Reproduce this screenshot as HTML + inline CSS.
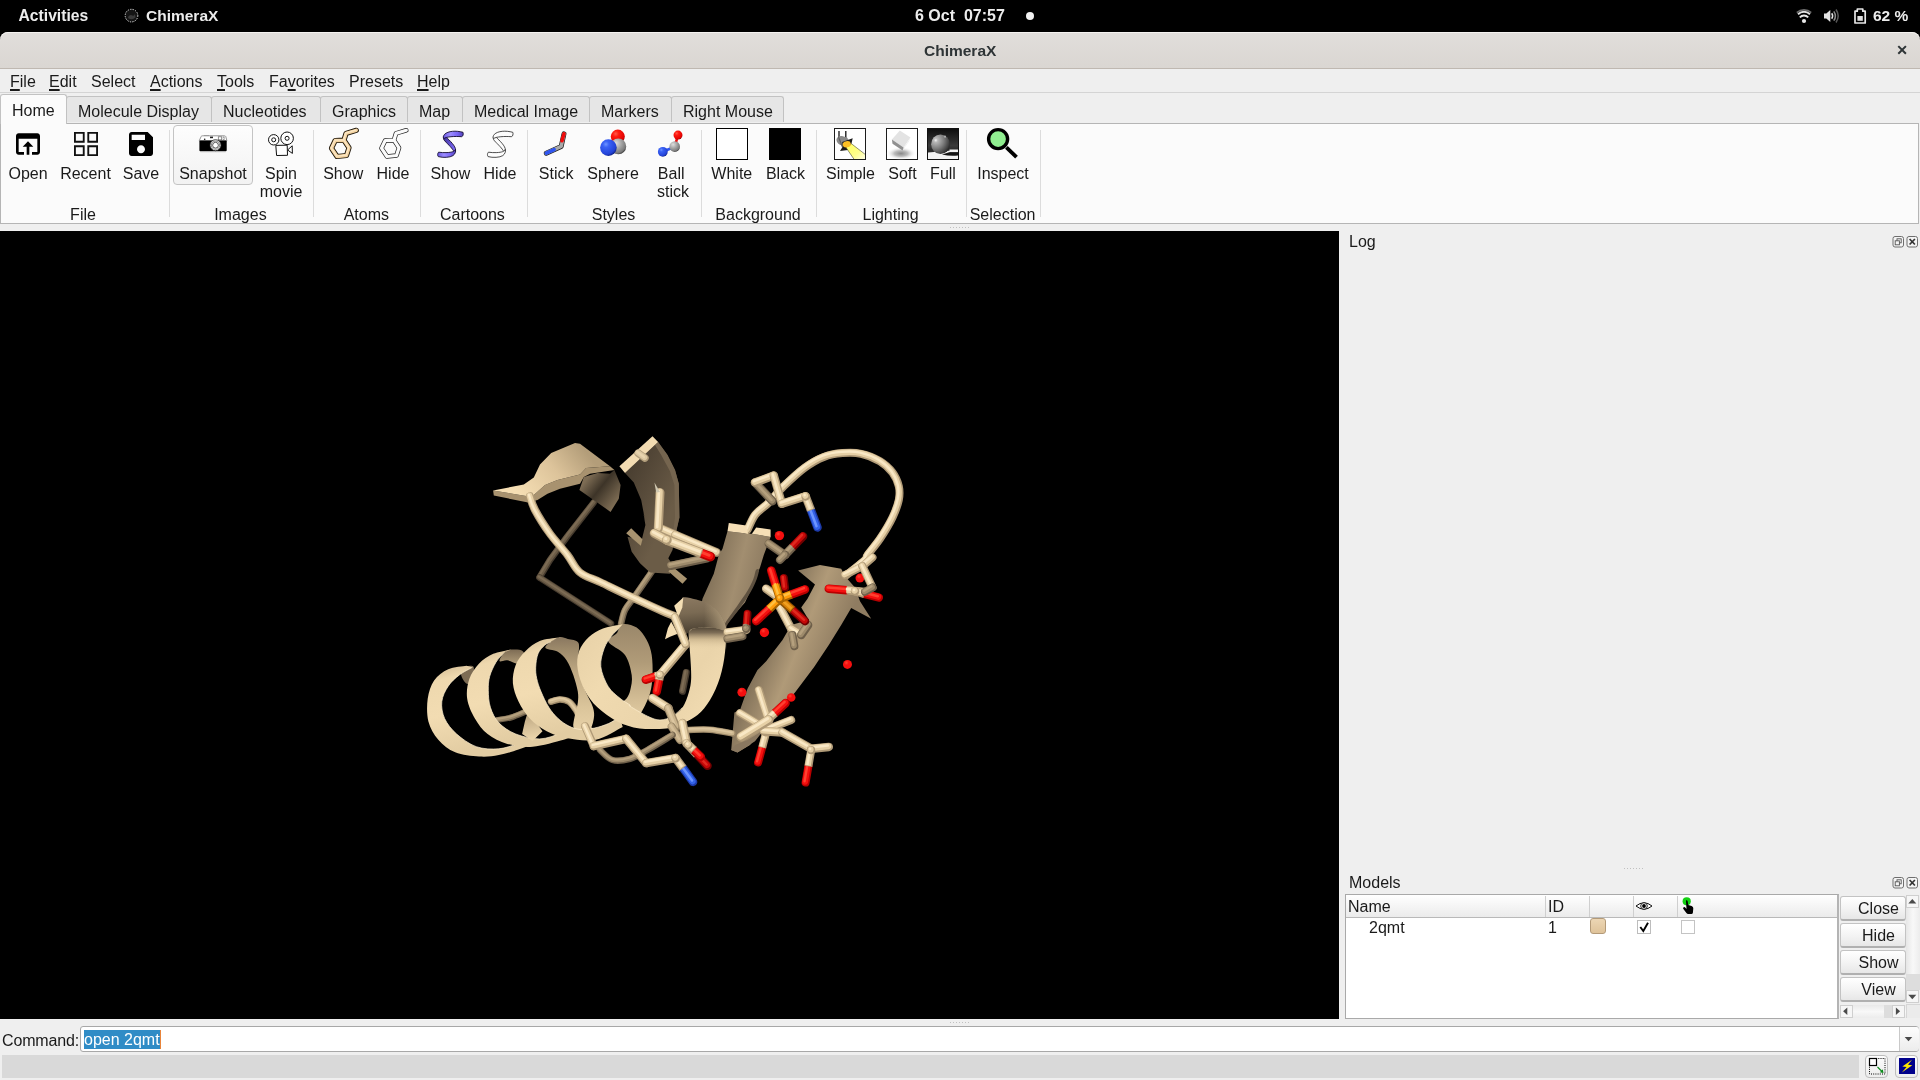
<!DOCTYPE html>
<html>
<head>
<meta charset="utf-8">
<title>ChimeraX</title>
<style>
html,body{margin:0;padding:0;}
body{width:1920px;height:1080px;overflow:hidden;background:#efefef;font-family:"Liberation Sans",sans-serif;font-size:16px;color:#1a1a1a;position:relative;}
.abs{position:absolute;}
.t{position:absolute;white-space:nowrap;line-height:18px;}
#topbar{left:0;top:0;width:1920px;height:32px;background:#000;}
#topbar .t{color:#ececec;font-weight:bold;font-size:15.5px;top:7px;}
#titlebar{left:0;top:32px;width:1920px;height:36px;background:linear-gradient(#e1dedb,#dad6d2);border-radius:8px 8px 0 0;border-bottom:1px solid #bfb8b1;box-shadow:inset 0 1px #f4f2f0;}
#titlebar .t{font-weight:bold;color:#2e3436;}
#menubar{left:0;top:69px;width:1920px;height:23px;background:#efefef;border-bottom:1px solid #d4d4d4;}
#menubar .t{top:4px;}
u{text-decoration:underline;text-underline-offset:2px;text-decoration-thickness:1.6px;}
.tab{position:absolute;top:96px;height:26px;background:#e6e6e6;border:1px solid #c2c2c2;border-bottom:none;border-radius:3px 3px 0 0;box-sizing:border-box;}
.tab .t{top:6px;}
#tabhome{top:94px;height:30px;background:#fbfbfb;z-index:3;}
#toolpanel{left:0;top:123px;width:1919px;height:101px;background:#fbfbfb;border:1px solid #b5b5b5;box-sizing:border-box;}
.sep{position:absolute;top:130px;width:1px;height:87px;background:#dcdcdc;}
.lbl{position:absolute;white-space:nowrap;line-height:18px;text-align:center;transform:translateX(-50%);}
#gfx{left:0;top:231px;width:1339px;height:788px;background:#000;}

.mbtn{position:absolute;left:1840px;width:66px;height:25px;box-sizing:border-box;border:1px solid #c3c3c3;border-bottom:2px solid #b0b0b0;border-radius:3px;background:linear-gradient(#ffffff,#f4f4f4 50%,#e7e7e7);}
.mbtn span{position:absolute;left:37.500px;top:3px;transform:translateX(-50%);line-height:18px;white-space:nowrap;}
</style>
</head>
<body>
<div id="root" style="position:absolute;left:0;top:0;width:1920px;height:1080px;will-change:transform;">
<!-- GNOME top bar -->
<div id="topbar" class="abs">
  <div class="t" style="left:18.500px;font-size:15.700px">Activities</div>
  <div class="t" style="left:146px">ChimeraX</div>
  <div class="t" style="left:915px;font-size:16px">6 Oct&nbsp; 07:57</div>
  <div class="abs" style="left:1026px;top:12px;width:8px;height:8px;border-radius:50%;background:#f2f2f2"></div>
  <div class="t" style="left:1873px">62 %</div>
</div>
<!-- Title bar -->
<div class="abs" style="left:0;top:32px;width:1920px;height:20px;background:#000"></div>
<div id="titlebar" class="abs">
  <div class="t" style="left:924px;top:10px;font-size:15.5px">ChimeraX</div>
</div>

<!-- top bar icons -->
<svg class="abs" style="left:120px;top:4px" width="24" height="24" viewBox="0 0 24 24">
 <circle cx="11.500" cy="11.600" r="5.800" fill="#141414"/>
 <circle cx="11.500" cy="11.600" r="6.300" fill="none" stroke="#f0f0f0" stroke-width="0.900" stroke-dasharray="1.400 1.100"/>
 <path d="M8 13 q2 -3 4.500 -1.500 q1.500 1 2.500 -1.500 l0.500 3.500 q-3 3 -7 1 z" fill="#3a3a3a"/>
</svg>
<svg class="abs" style="left:1790px;top:4px" width="84" height="24" viewBox="1790 4 84 24">
 <!-- wifi -->
 <circle cx="1804" cy="21" r="2.100" fill="#e8e8e8"/>
 <path d="M1799.800 17.300 A5.800 5.800 0 0 1 1808.200 17.300" stroke="#e8e8e8" stroke-width="1.900" fill="none"/>
 <path d="M1798 14.200 A8.600 8.600 0 0 1 1810 14.200" stroke="#e0e0e0" stroke-width="1.900" fill="none"/>
 <path d="M1796.800 12.600 A11 11 0 0 1 1811.200 12.600" stroke="#6e6e6e" stroke-width="1.900" fill="none"/>
 <!-- volume -->
 <path d="M1824 13.500 H1826.300 L1830.300 10 V22 L1826.300 18.500 H1824 Z" fill="#e4e4e4"/>
 <path d="M1831.700 13.300 Q1833.600 16 1831.700 18.700" stroke="#e4e4e4" stroke-width="1.500" fill="none"/>
 <path d="M1833.800 11.300 Q1837 16 1833.800 20.700" stroke="#8c8c8c" stroke-width="1.500" fill="none"/>
 <path d="M1836 9.500 Q1840.400 16 1836 22.500" stroke="#585858" stroke-width="1.500" fill="none"/>
 <!-- battery -->
 <path d="M1855 11.200 H1857.300 V9 H1862.800 V11.200 H1865.200 V23 H1855 Z" fill="none" stroke="#e6e6e6" stroke-width="1.700" stroke-linejoin="round"/>
 <rect x="1857.400" y="16" width="5.400" height="4.800" fill="#e0e0e0"/>
</svg>
<svg class="abs" style="left:1894px;top:42px" width="16" height="16" viewBox="0 0 16 16"><path d="M4.300 4.100 L11.900 11.700 M11.900 4.100 L4.300 11.700" stroke="#2e3436" stroke-width="2" fill="none"/></svg>
<!-- Menu bar -->
<div id="menubar" class="abs">
  <div class="t" style="left:10px"><u>F</u>ile</div>
  <div class="t" style="left:49px"><u>E</u>dit</div>
  <div class="t" style="left:91px">Select</div>
  <div class="t" style="left:150px"><u>A</u>ctions</div>
  <div class="t" style="left:217px"><u>T</u>ools</div>
  <div class="t" style="left:269px">Fa<u>v</u>orites</div>
  <div class="t" style="left:349px">Presets</div>
  <div class="t" style="left:417px"><u>H</u>elp</div>
</div>
<!-- Tabs -->
<div class="tab" id="tabhome" style="left:0px;width:67px"><div class="t" style="left:11px;top:7px">Home</div></div>
<div class="tab" style="left:66px;width:146px"><div class="t" style="left:11px">Molecule Display</div></div>
<div class="tab" style="left:211px;width:110px"><div class="t" style="left:11px">Nucleotides</div></div>
<div class="tab" style="left:320px;width:88px"><div class="t" style="left:11px">Graphics</div></div>
<div class="tab" style="left:407px;width:56px"><div class="t" style="left:11px">Map</div></div>
<div class="tab" style="left:462px;width:128px"><div class="t" style="left:11px">Medical Image</div></div>
<div class="tab" style="left:589px;width:83px"><div class="t" style="left:11px">Markers</div></div>
<div class="tab" style="left:671px;width:113px"><div class="t" style="left:11px">Right Mouse</div></div>
<!-- Tool panel -->
<div id="toolpanel" class="abs"></div>

<!-- Toolbar separators -->
<div class="sep" style="left:169px"></div>
<div class="sep" style="left:313px"></div>
<div class="sep" style="left:420px"></div>
<div class="sep" style="left:527px"></div>
<div class="sep" style="left:701px"></div>
<div class="sep" style="left:816px"></div>
<div class="sep" style="left:966px"></div>
<div class="sep" style="left:1040px"></div>
<!-- Snapshot button frame -->
<div class="abs" style="left:173px;top:125px;width:80px;height:60px;box-sizing:border-box;border:1px solid #c4c4c4;border-radius:4px;background:linear-gradient(#fdfdfd,#f2f2f2)"></div>
<!-- Icons -->
<svg class="abs" style="left:12px;top:128px" width="32" height="32" viewBox="0 0 24 24"><path fill="#000" d="M19 4H5c-1.11 0-2 .9-2 2v12c0 1.1.89 2 2 2h4v-2H5V8h14v10h-4v2h4c1.1 0 2-.9 2-2V6c0-1.1-.89-2-2-2zm-7 6l-4 4h3v6h2v-6h3l-4-4z"/></svg>
<svg class="abs" style="left:70px;top:128px" width="32" height="32" viewBox="0 0 24 24"><path fill="#111" d="M3 3v8h8V3H3zm6.6 6.6H4.4V4.400h5.2v5.2zM3 13v8h8v-8H3zm6.6 6.6H4.4v-5.2h5.2v5.2zM13 3v8h8V3h-8zm6.600 6.600h-5.200V4.400h5.200v5.200zM13 13v8h8v-8h-8zm6.600 6.600h-5.200v-5.200h5.200v5.200z"/></svg>
<svg class="abs" style="left:125px;top:128px" width="32" height="32" viewBox="0 0 24 24"><path fill="#000" d="M17 3H5c-1.11 0-2 .9-2 2v14c0 1.1.89 2 2 2h14c1.1 0 2-.9 2-2V7l-4-4zm-5 16c-1.660 0-3-1.340-3-3s1.340-3 3-3 3 1.340 3 3-1.340 3-3 3zm3-10H5V5h10v4z"/></svg>
<!-- camera -->
<svg class="abs" style="left:196px;top:130px" width="34" height="26" viewBox="0 0 34 26">
 <path d="M3.2 10.800 L5.200 6.400 Q5.600 5.800 6.400 5.800 L28.400 5.800 Q29.400 5.800 29.800 6.600 L30.900 10.800 Z" fill="#fff" stroke="#8a8a8a" stroke-width="0.900"/>
 <rect x="3.400" y="10.600" width="27.300" height="10.600" rx="1" fill="#000"/>
 <rect x="4.400" y="21" width="25.300" height="1.200" fill="#b8b8b8"/>
 <rect x="8" y="5" width="5" height="0.900" fill="#999"/>
 <rect x="14" y="6.600" width="3" height="1.600" fill="#222"/>
 <rect x="22.300" y="6.800" width="3.400" height="3" fill="#fff" stroke="#666" stroke-width="0.700"/>
 <rect x="27" y="6.800" width="1.600" height="3" fill="#fff" stroke="#888" stroke-width="0.500"/>
 <circle cx="8.700" cy="9.300" r="0.800" fill="#111"/>
 <circle cx="19.500" cy="15.200" r="5.500" fill="#fff" stroke="#222" stroke-width="0.800"/>
 <circle cx="19.500" cy="15.200" r="4.100" fill="#fff" stroke="#555" stroke-width="0.700"/>
 <circle cx="19.500" cy="15.200" r="2.900" fill="#fff" stroke="#111" stroke-width="0.700"/>
</svg>
<!-- movie camera -->
<svg class="abs" style="left:264px;top:128px" width="34" height="32" viewBox="0 0 34 32">
 <circle cx="9.700" cy="11.800" r="5.200" fill="#fff" stroke="#111" stroke-width="1"/>
 <circle cx="9.700" cy="11.800" r="2" fill="#fff" stroke="#111" stroke-width="1"/>
 <circle cx="23.100" cy="10.300" r="6.300" fill="#fff" stroke="#111" stroke-width="1"/>
 <circle cx="23.100" cy="10.300" r="2" fill="#fff" stroke="#111" stroke-width="1"/>
 <path d="M11.800 17.400 L23.200 17.200 L23.500 27.300 L12.600 27.500 Z" fill="#fff" stroke="#111" stroke-width="1"/>
 <path d="M23.600 22 L28.200 17.800 L28.400 25.400 Z" fill="#fff" stroke="#111" stroke-width="1"/>
</svg>

<svg class="abs" style="left:0;top:124px" width="1100" height="100" viewBox="0 124 1100 100">
<defs>
<linearGradient id="rbT" x1="0" y1="0" x2="1" y2="0"><stop offset="0" stop-color="#6a58e0"/><stop offset="0.350" stop-color="#9c8cff"/><stop offset="0.700" stop-color="#7a66f5"/><stop offset="1" stop-color="#5443b8"/></linearGradient>
<linearGradient id="rbD" x1="0" y1="0" x2="1" y2="1"><stop offset="0" stop-color="#3a2d90"/><stop offset="0.600" stop-color="#6c5ae0"/><stop offset="1" stop-color="#8a78ff"/></linearGradient>
<radialGradient id="sphB" cx="0.350" cy="0.300" r="0.750"><stop offset="0" stop-color="#6f95ff"/><stop offset="0.250" stop-color="#3a62f5"/><stop offset="0.800" stop-color="#2343d8"/><stop offset="1" stop-color="#0f2080"/></radialGradient>
<radialGradient id="sphG" cx="0.350" cy="0.300" r="0.750"><stop offset="0" stop-color="#dedede"/><stop offset="0.400" stop-color="#adadad"/><stop offset="0.850" stop-color="#7a7a7a"/><stop offset="1" stop-color="#333"/></radialGradient>
<radialGradient id="sphR" cx="0.350" cy="0.300" r="0.750"><stop offset="0" stop-color="#ff5a4a"/><stop offset="0.300" stop-color="#ff1a10"/><stop offset="0.850" stop-color="#e00000"/><stop offset="1" stop-color="#700"/></radialGradient>
<linearGradient id="beam" x1="0" y1="0" x2="1" y2="1"><stop offset="0" stop-color="#ffff5e"/><stop offset="0.600" stop-color="#ffff8c"/><stop offset="1" stop-color="#fffff0"/></linearGradient>
<radialGradient id="shad" cx="0.500" cy="0.500" r="0.500"><stop offset="0" stop-color="#8a8a8a"/><stop offset="0.450" stop-color="#bdbdbd"/><stop offset="1" stop-color="#fff" stop-opacity="0"/></radialGradient>
<radialGradient id="apple" cx="0.250" cy="0.300" r="0.850"><stop offset="0" stop-color="#f4f4f4"/><stop offset="0.120" stop-color="#b9b9b9"/><stop offset="0.500" stop-color="#7e7e7e"/><stop offset="0.850" stop-color="#3e3e3e"/><stop offset="1" stop-color="#1c1c1c"/></radialGradient>
<linearGradient id="fullbg" x1="0" y1="0" x2="0" y2="1"><stop offset="0" stop-color="#0c0c0c"/><stop offset="0.550" stop-color="#3a3a3a"/><stop offset="0.700" stop-color="#2a2a2a"/></linearGradient>
</defs>
<g transform="translate(0,0)" fill="none" stroke-linejoin="round" stroke-linecap="round"><path d="M331.5 148.2 L335.200 140.500 L344 140.200 L349 147.800 L346.500 155.500 L337 156.500 Z M344 140.200 L346 133.400 L356.300 130.300" stroke="#1c1408" stroke-width="5.200"/><path d="M331.5 148.2 L335.200 140.500 L344 140.200 L349 147.800 L346.500 155.500 L337 156.500 Z M344 140.200 L346 133.400 L356.300 130.300" stroke="#f3d3a0" stroke-width="3.400"/><path d="M331.5 148.2 L335.200 140.500 L344 140.200 L349 147.800 L346.500 155.500 L337 156.500 Z M344 140.200 L346 133.400 L356.300 130.300" stroke="#fbe6c4" stroke-width="1.400" transform="translate(-0.300,-0.400)"/></g>
<g transform="translate(50,0)" fill="none" stroke-linejoin="round" stroke-linecap="round"><path d="M331.5 148.2 L335.200 140.500 L344 140.200 L349 147.800 L346.500 155.500 L337 156.500 Z M344 140.200 L346 133.400 L356.300 130.300" stroke="#222" stroke-width="4.600"/><path d="M331.5 148.2 L335.200 140.500 L344 140.200 L349 147.800 L346.500 155.500 L337 156.500 Z M344 140.200 L346 133.400 L356.300 130.300" stroke="#fbfbfb" stroke-width="3.200"/></g>
<g transform="translate(0,0)" stroke="#120a30" stroke-width="0.900" stroke-linejoin="round"><path d="M443.600 136.800 C443 139 444 140.200 446 142.200 C450 146.200 453.800 150 454.300 152.700 L455.600 150 C455.600 146 450.200 141 445.600 136.500 Z" fill="url(#rbD)"/><path d="M463 132.300 C456 130.400 448 130.900 444.600 134.300 C443.100 136 443 137.500 443.800 138.600 C446 136.700 455 136.100 461.500 136.700 C463.100 136.500 463.600 134 463 132.300 Z" fill="url(#rbT)"/><path d="M438.600 152.200 C437.400 153.500 437.400 155.600 438.300 156.600 C443 157.900 450 157.600 453 155.600 C455.200 154 456.100 151.500 455.400 149.500 C454.500 151.500 452 152.300 447 152.600 C444 152.700 441 152.600 438.600 152.200 Z" fill="url(#rbT)"/></g>
<g transform="translate(49.8,0)" stroke="#222" stroke-width="0.800" stroke-linejoin="round" fill="#fdfdfd"><path d="M443.600 136.800 C443 139 444 140.200 446 142.200 C450 146.200 453.800 150 454.300 152.700 L455.600 150 C455.600 146 450.200 141 445.600 136.500 Z"/><path d="M463 132.300 C456 130.400 448 130.900 444.600 134.300 C443.100 136 443 137.500 443.800 138.600 C446 136.700 455 136.100 461.500 136.700 C463.100 136.500 463.600 134 463 132.300 Z"/><path d="M438.600 152.200 C437.400 153.500 437.400 155.600 438.300 156.600 C443 157.900 450 157.600 453 155.600 C455.200 154 456.100 151.500 455.400 149.500 C454.500 151.500 452 152.300 447 152.600 C444 152.700 441 152.600 438.600 152.200 Z"/></g>
<!-- stick -->
<g fill="none" stroke-linecap="round" stroke-linejoin="round">
<path d="M546.300 153.200 L561.200 146.400 L564 133.800" stroke="#1a1a1a" stroke-width="4.900"/>
<path d="M546.300 153.200 L561.200 146.400 L564 133.800" stroke="#a9a9a9" stroke-width="3.500"/>
<path d="M546.300 153.200 L554.200 149.600" stroke="#2f55f0" stroke-width="3.500"/>
<path d="M562 140.800 L564 133.800" stroke="#f00a0a" stroke-width="3.500"/>
</g>
<!-- sphere -->
<circle cx="617.800" cy="136.600" r="7" fill="url(#sphR)"/>
<circle cx="618.300" cy="146.400" r="7.900" fill="url(#sphG)"/>
<circle cx="608.400" cy="147.600" r="8.300" fill="url(#sphB)"/>
<!-- ball stick -->
<path d="M662.800 151.800 L674.700 146.800" stroke="#2f55f0" stroke-width="2.600" fill="none"/>
<path d="M674.700 146.800 L678 135" stroke="#e81010" stroke-width="2.600" fill="none"/>
<circle cx="662.800" cy="151.800" r="4.900" fill="url(#sphB)"/>
<circle cx="674.700" cy="146.600" r="5.300" fill="url(#sphG)"/>
<circle cx="678" cy="135.100" r="4.500" fill="url(#sphR)"/>
<!-- white / black -->
<rect x="716.500" y="128.500" width="31" height="31" fill="#fff" stroke="#000" stroke-width="1"/>
<rect x="769" y="128" width="32" height="32" fill="#000"/>
<!-- simple -->
<rect x="834.500" y="128.500" width="31" height="31" fill="#fff" stroke="#1c1c1c" stroke-width="1"/>
<path d="M839 131 V138 M845.800 131 V138" stroke="#111" stroke-width="1.300" fill="none"/>
<path d="M836.500 139 Q838 135.500 842 136 L847 137.600 L850 142 L845 147 L839.500 144.500 Q836 142 836.500 139 Z" fill="#8a8a8a"/>
<path d="M838.500 137 L842.500 147" stroke="#5e5e5e" stroke-width="1.200" fill="none"/>
<path d="M842.200 142 L852.700 138.300 L851.500 143.500 L848 150 L840 151 L842.800 146.500 Z" fill="#1a1a1a"/>
<path d="M846 147.500 L851.500 143.800 L865.500 154.600 V159.500 H854.200 Z" fill="url(#beam)" stroke="#222" stroke-width="0.500"/>
<rect x="853" y="159" width="13" height="1" fill="#1c1c1c"/>
<rect x="865" y="153" width="1" height="7" fill="#1c1c1c"/>
<ellipse cx="846.800" cy="144.300" rx="4.100" ry="3.100" fill="#fbbf24" transform="rotate(-12 846.800 144.300)"/>
<!-- soft -->
<rect x="886.500" y="128.500" width="31" height="31" fill="#fff" stroke="#1c1c1c" stroke-width="1"/>
<ellipse cx="901" cy="153.500" rx="15" ry="6.500" fill="url(#shad)"/>
<path d="M899.800 130.400 L910.500 137.600 L903.600 147.600 L891.900 139.600 Z" fill="#e3e3e3"/>
<path d="M910.500 137.600 L903.600 147.600 L902.700 150.400 L909 141.500 Z" fill="#f1f1f1"/>
<path d="M891.900 139.600 L903.600 147.600 L902.600 150.400 L892.500 143.800 Z" fill="#909090"/>
<!-- full -->
<rect x="927" y="128" width="32" height="32" fill="url(#fullbg)"/>
<path d="M928 152.500 L946 151 L958 150 V159 H928 Z" fill="#f2f2f2"/>
<path d="M942 154.500 Q950 156.500 958 155.500 V152 L950 152 Z" fill="#151515"/>
<rect x="949.500" y="149.500" width="8.500" height="2.600" fill="#f4f4f4"/>
<ellipse cx="940.500" cy="144.200" rx="9.400" ry="9.800" fill="url(#apple)"/>
<path d="M943.500 136.500 q1.500 -1.500 2.500 -0.500 q0.500 1.500 -1 2 z" fill="#aaa"/>
<rect x="927.500" y="128.500" width="31" height="31" fill="none" stroke="#111" stroke-width="1"/>
<!-- inspect -->
<path d="M1006.400 147.300 L1016.500 157.200" stroke="#000" stroke-width="3.800" fill="none"/>
<circle cx="998.100" cy="139.100" r="9.500" fill="#90ee90" stroke="#000" stroke-width="3.400"/>
</svg>
<!-- Toolbar labels -->
<div class="lbl" style="left:28px;top:165px">Open</div>
<div class="lbl" style="left:85.5px;top:165px">Recent</div>
<div class="lbl" style="left:141px;top:165px">Save</div>
<div class="lbl" style="left:213px;top:165px">Snapshot</div>
<div class="lbl" style="left:281px;top:165px">Spin</div>
<div class="lbl" style="left:281px;top:183px">movie</div>
<div class="lbl" style="left:343.2px;top:165px">Show</div>
<div class="lbl" style="left:393px;top:165px">Hide</div>
<div class="lbl" style="left:450.4px;top:165px">Show</div>
<div class="lbl" style="left:500px;top:165px">Hide</div>
<div class="lbl" style="left:556.2px;top:165px">Stick</div>
<div class="lbl" style="left:613px;top:165px">Sphere</div>
<div class="lbl" style="left:671.2px;top:165px">Ball</div>
<div class="lbl" style="left:673px;top:183px">stick</div>
<div class="lbl" style="left:731.8px;top:165px">White</div>
<div class="lbl" style="left:785.5px;top:165px">Black</div>
<div class="lbl" style="left:850.5px;top:165px">Simple</div>
<div class="lbl" style="left:902.5px;top:165px">Soft</div>
<div class="lbl" style="left:943px;top:165px">Full</div>
<div class="lbl" style="left:1003px;top:165px">Inspect</div>
<div class="lbl" style="left:83px;top:206px">File</div>
<div class="lbl" style="left:240.4px;top:206px">Images</div>
<div class="lbl" style="left:366.3px;top:206px">Atoms</div>
<div class="lbl" style="left:472.4px;top:206px">Cartoons</div>
<div class="lbl" style="left:613.5px;top:206px">Styles</div>
<div class="lbl" style="left:758px;top:206px">Background</div>
<div class="lbl" style="left:890.5px;top:206px">Lighting</div>
<div class="lbl" style="left:1002.6px;top:206px">Selection</div>
<!-- Graphics -->
<div id="gfx" class="abs"></div>
<!--MOL--><svg class="abs" style="left:0;top:231px" width="1339" height="788" viewBox="0 231 1339 788">
<defs><linearGradient id="g1" gradientUnits="userSpaceOnUse" x1="630.0" y1="467.5" x2="680.0" y2="492.5"><stop offset="0" stop-color="#4a3f31"/><stop offset="0.5" stop-color="#5a4d3c"/><stop offset="1" stop-color="#6b5c47"/></linearGradient><linearGradient id="g2" gradientUnits="userSpaceOnUse" x1="580.0" y1="443.8" x2="517.5" y2="492.5"><stop offset="0" stop-color="#b39d79"/><stop offset="0.45" stop-color="#dcc39a"/><stop offset="1" stop-color="#f6dfb4"/></linearGradient><linearGradient id="g3" gradientUnits="userSpaceOnUse" x1="586.2" y1="480.0" x2="617.5" y2="505.0"><stop offset="0" stop-color="#7d6c54"/><stop offset="0.4" stop-color="#3d3428"/><stop offset="1" stop-color="#857359"/></linearGradient><linearGradient id="g4" gradientUnits="userSpaceOnUse" x1="710.0" y1="580.0" x2="760.0" y2="592.5"><stop offset="0" stop-color="#85745b"/><stop offset="0.5" stop-color="#a28e70"/><stop offset="1" stop-color="#8c7a60"/></linearGradient><radialGradient id="g5" cx="0.38" cy="0.32" r="0.75"><stop offset="0" stop-color="#ff4030"/><stop offset="0.35" stop-color="#f50f0f"/><stop offset="0.85" stop-color="#f50f0f"/><stop offset="1" stop-color="#b80000"/></radialGradient><linearGradient id="g6" gradientUnits="userSpaceOnUse" x1="427.7" y1="665.7" x2="450.4" y2="756.5"><stop offset="0" stop-color="#cdb690"/><stop offset="0.18" stop-color="#eed8ae"/><stop offset="0.55" stop-color="#f2dcb2"/><stop offset="1" stop-color="#e2cca2"/></linearGradient><linearGradient id="g7" gradientUnits="userSpaceOnUse" x1="513.0" y1="649.6" x2="513.0" y2="663.9"><stop offset="0" stop-color="#7d6c54"/><stop offset="1" stop-color="#b09b78"/></linearGradient><linearGradient id="g8" gradientUnits="userSpaceOnUse" x1="467.2" y1="649.6" x2="491.4" y2="746.7"><stop offset="0" stop-color="#cdb690"/><stop offset="0.18" stop-color="#eed8ae"/><stop offset="0.55" stop-color="#f2dcb2"/><stop offset="1" stop-color="#e2cca2"/></linearGradient><linearGradient id="g9" gradientUnits="userSpaceOnUse" x1="527.0" y1="711.5" x2="531.2" y2="738.2"><stop offset="0" stop-color="#b8a27e"/><stop offset="1" stop-color="#ead4aa"/></linearGradient><linearGradient id="g10" gradientUnits="userSpaceOnUse" x1="575.0" y1="637.6" x2="575.0" y2="732.6"><stop offset="0" stop-color="#8a7860"/><stop offset="0.12" stop-color="#9d8a6b"/><stop offset="0.4" stop-color="#c2ac86"/><stop offset="0.75" stop-color="#dcc69c"/><stop offset="1" stop-color="#e8d2a8"/></linearGradient><linearGradient id="g11" gradientUnits="userSpaceOnUse" x1="512.9" y1="637.6" x2="538.4" y2="739.7"><stop offset="0" stop-color="#cdb690"/><stop offset="0.18" stop-color="#eed8ae"/><stop offset="0.55" stop-color="#f2dcb2"/><stop offset="1" stop-color="#e2cca2"/></linearGradient><linearGradient id="g12" gradientUnits="userSpaceOnUse" x1="630.0" y1="624.2" x2="630.0" y2="720.0"><stop offset="0" stop-color="#9a876a"/><stop offset="0.4" stop-color="#b09b78"/><stop offset="0.8" stop-color="#d4be96"/><stop offset="1" stop-color="#e4cea4"/></linearGradient><linearGradient id="g13" gradientUnits="userSpaceOnUse" x1="577.0" y1="640.0" x2="700.0" y2="730.0"><stop offset="0" stop-color="#e8d2a8"/><stop offset="0.3" stop-color="#f0dab0"/><stop offset="0.75" stop-color="#ead4aa"/><stop offset="1" stop-color="#f2dcb2"/></linearGradient><linearGradient id="g14" gradientUnits="userSpaceOnUse" x1="700.0" y1="627.0" x2="700.0" y2="650.0"><stop offset="0" stop-color="#4f4435"/><stop offset="0.25" stop-color="rgba(120,104,82,0.95)"/><stop offset="0.55" stop-color="rgba(190,168,130,0.6)"/><stop offset="1" stop-color="rgba(236,214,172,0)"/></linearGradient><linearGradient id="g15" gradientUnits="userSpaceOnUse" x1="700.0" y1="597.0" x2="703.0" y2="630.0"><stop offset="0" stop-color="#8a7860"/><stop offset="0.45" stop-color="#7a6a53"/><stop offset="1" stop-color="#4f4435"/></linearGradient><linearGradient id="g16" gradientUnits="userSpaceOnUse" x1="704.0" y1="615.0" x2="727.0" y2="615.0"><stop offset="0" stop-color="rgba(200,178,140,0)"/><stop offset="1" stop-color="rgba(205,183,145,0.75)"/></linearGradient><linearGradient id="g17" gradientUnits="userSpaceOnUse" x1="772.5" y1="630.0" x2="835.0" y2="655.0"><stop offset="0" stop-color="#85745b"/><stop offset="0.45" stop-color="#b09a78"/><stop offset="1" stop-color="#8f7c61"/></linearGradient><radialGradient id="g18" cx="0.38" cy="0.32" r="0.75"><stop offset="0" stop-color="#ff4030"/><stop offset="0.35" stop-color="#f50f0f"/><stop offset="0.85" stop-color="#f50f0f"/><stop offset="1" stop-color="#b80000"/></radialGradient><radialGradient id="g19" cx="0.38" cy="0.32" r="0.75"><stop offset="0" stop-color="#ff4030"/><stop offset="0.35" stop-color="#f50f0f"/><stop offset="0.85" stop-color="#f50f0f"/><stop offset="1" stop-color="#b80000"/></radialGradient><radialGradient id="g20" cx="0.38" cy="0.32" r="0.75"><stop offset="0" stop-color="#ff4030"/><stop offset="0.35" stop-color="#f50f0f"/><stop offset="0.85" stop-color="#f50f0f"/><stop offset="1" stop-color="#b80000"/></radialGradient><radialGradient id="g21" cx="0.38" cy="0.32" r="0.75"><stop offset="0" stop-color="#ff4030"/><stop offset="0.35" stop-color="#f50f0f"/><stop offset="0.85" stop-color="#f50f0f"/><stop offset="1" stop-color="#b80000"/></radialGradient><radialGradient id="g22" cx="0.38" cy="0.32" r="0.75"><stop offset="0" stop-color="#ff4030"/><stop offset="0.35" stop-color="#f50f0f"/><stop offset="0.85" stop-color="#f50f0f"/><stop offset="1" stop-color="#b80000"/></radialGradient></defs>
<path d="M593.8 502.5 L567.5 536.2 L550.0 560.0 L539.5 577.5" stroke="#463b2e" stroke-width="6.5" fill="none" stroke-linecap="round" stroke-linejoin="round"/>
<path d="M593.8 502.5 L567.5 536.2 L550.0 560.0 L539.5 577.5" stroke="#6b5c47" stroke-width="4.7" fill="none" stroke-linecap="round" stroke-linejoin="round" transform="translate(-0.4,-0.5)"/>
<path d="M593.8 502.5 L567.5 536.2 L550.0 560.0 L539.5 577.5" stroke="#7d6c55" stroke-width="1.9" fill="none" stroke-linecap="round" stroke-linejoin="round" transform="translate(-0.8,-1.0)"/>
<path d="M539.5 577.5 L611.0 623.5" stroke="#463b2e" stroke-width="6.5" fill="none" stroke-linecap="round" stroke-linejoin="round"/>
<path d="M539.5 577.5 L611.0 623.5" stroke="#6b5c47" stroke-width="4.7" fill="none" stroke-linecap="round" stroke-linejoin="round" transform="translate(-0.4,-0.5)"/>
<path d="M539.5 577.5 L611.0 623.5" stroke="#7d6c55" stroke-width="1.9" fill="none" stroke-linecap="round" stroke-linejoin="round" transform="translate(-0.8,-1.0)"/>
<path d="M653.0 570.0 C650.0 574.3 639.7 589.3 635.0 596.0 C630.3 602.7 627.3 605.3 625.0 610.0 C622.7 614.7 621.7 621.7 621.0 624.0" stroke="#6e5f4a" stroke-width="6.5" fill="none" stroke-linecap="round" stroke-linejoin="round"/>
<path d="M653.0 570.0 C650.0 574.3 639.7 589.3 635.0 596.0 C630.3 602.7 627.3 605.3 625.0 610.0 C622.7 614.7 621.7 621.7 621.0 624.0" stroke="#9d8a6b" stroke-width="4.7" fill="none" stroke-linecap="round" stroke-linejoin="round" transform="translate(-0.4,-0.5)"/>
<path d="M653.0 570.0 C650.0 574.3 639.7 589.3 635.0 596.0 C630.3 602.7 627.3 605.3 625.0 610.0 C622.7 614.7 621.7 621.7 621.0 624.0" stroke="#b5a07e" stroke-width="1.9" fill="none" stroke-linecap="round" stroke-linejoin="round" transform="translate(-0.8,-1.0)"/>
<path d="M625.0 473.1 L658.1 441.9 L667.5 455.0 L675.0 470.0 L678.8 483.8 L679.4 517.5 L675.0 536.2 L678.8 520.8 L675.0 535.8 L672.5 550.0 L668.3 558.3 L673.8 566.7 L670.0 573.8 L650.0 572.5 L640.0 563.3 L631.7 551.7 L627.5 536.7 L641.7 540.0 L645.4 525.0 L643.3 512.5 L645.0 520.0 L641.2 500.0 L633.8 482.5 Z" fill="url(#g1)" />
<path d="M658.1 441.9 L667.5 455.0 L675.0 470.0 L678.8 483.8 L679.4 517.5 L675.0 536.2 L672.5 536.2 L675.0 517.5 L674.4 485.0 L670.0 471.2 L661.2 455.0 L655.0 445.0 Z" fill="#75654f" />
<path d="M626.2 533.3 L631.2 528.3 L642.5 539.2 L640.8 545.8 Z" fill="#a8936f" />
<path d="M668.3 571.2 L672.9 567.1 L687.1 578.8 L682.5 583.8 Z" fill="#a8936f" />
<path d="M619.4 466.2 L652.5 436.2 L658.1 441.9 L625.0 473.1 Z" fill="#f3dcb2" />
<path d="M638.1 453.1 L645.0 458.1" stroke="#b09c7a" stroke-width="7.5" fill="none" stroke-linecap="round" stroke-linejoin="round"/>
<path d="M638.1 453.1 L645.0 458.1" stroke="#dcc8a2" stroke-width="5.4" fill="none" stroke-linecap="round" stroke-linejoin="round" transform="translate(-0.4,-0.6)"/>
<path d="M638.1 453.1 L645.0 458.1" stroke="#e8d4ae" stroke-width="2.2" fill="none" stroke-linecap="round" stroke-linejoin="round" transform="translate(-0.9,-1.1)"/>
<path d="M583.8 476.9 L597.5 473.1 L610.0 473.8 L614.4 470.0 L620.6 485.0 L618.8 498.8 L610.6 511.9 L579.4 490.0 Z" fill="url(#g3)" />
<path d="M493.1 490.6 L527.5 496.2 L533.8 495.0 L545.0 485.0 L557.5 480.0 L580.0 474.4 L586.2 468.1 L610.0 466.2 L614.4 470.0 L590.0 473.8 L583.8 476.9 L580.0 483.8 L560.0 488.8 L547.5 493.8 L537.5 500.0 L528.1 502.5 L493.8 495.6 Z" fill="#a8926f" />
<path d="M493.1 490.6 L523.8 484.4 L533.8 477.5 L540.0 464.4 L551.2 453.1 L575.0 443.1 L580.0 443.8 L610.0 466.2 L586.2 468.1 L580.0 474.4 L557.5 480.0 L545.0 485.0 L533.8 495.0 L527.5 496.2 Z" fill="url(#g2)" />
<path d="M530.0 496.2 C530.8 498.5 531.7 503.8 535.0 510.0 C538.3 516.2 544.6 526.2 550.0 533.8 C555.4 541.2 562.5 548.5 567.5 555.0 C572.5 561.5 574.4 567.9 580.0 572.5 C585.6 577.1 592.2 578.3 601.0 582.5 C609.8 586.7 622.3 592.8 632.5 597.5 C642.7 602.2 652.4 606.9 662.0 611.0 C671.6 615.1 685.3 620.2 690.0 622.0" stroke="#b09a77" stroke-width="8.0" fill="none" stroke-linecap="round" stroke-linejoin="round"/>
<path d="M530.0 496.2 C530.8 498.5 531.7 503.8 535.0 510.0 C538.3 516.2 544.6 526.2 550.0 533.8 C555.4 541.2 562.5 548.5 567.5 555.0 C572.5 561.5 574.4 567.9 580.0 572.5 C585.6 577.1 592.2 578.3 601.0 582.5 C609.8 586.7 622.3 592.8 632.5 597.5 C642.7 602.2 652.4 606.9 662.0 611.0 C671.6 615.1 685.3 620.2 690.0 622.0" stroke="#e6d0a6" stroke-width="5.8" fill="none" stroke-linecap="round" stroke-linejoin="round" transform="translate(-0.5,-0.6)"/>
<path d="M530.0 496.2 C530.8 498.5 531.7 503.8 535.0 510.0 C538.3 516.2 544.6 526.2 550.0 533.8 C555.4 541.2 562.5 548.5 567.5 555.0 C572.5 561.5 574.4 567.9 580.0 572.5 C585.6 577.1 592.2 578.3 601.0 582.5 C609.8 586.7 622.3 592.8 632.5 597.5 C642.7 602.2 652.4 606.9 662.0 611.0 C671.6 615.1 685.3 620.2 690.0 622.0" stroke="#f9e8c6" stroke-width="2.4" fill="none" stroke-linecap="round" stroke-linejoin="round" transform="translate(-1.0,-1.2)"/>
<path d="M670.8 565.8 L706.7 558.3" stroke="#6e5f4a" stroke-width="8.5" fill="none" stroke-linecap="round" stroke-linejoin="round"/>
<path d="M670.8 565.8 L706.7 558.3" stroke="#9d8a6b" stroke-width="6.1" fill="none" stroke-linecap="round" stroke-linejoin="round" transform="translate(-0.5,-0.7)"/>
<path d="M670.8 565.8 L706.7 558.3" stroke="#b5a07e" stroke-width="2.5" fill="none" stroke-linecap="round" stroke-linejoin="round" transform="translate(-1.0,-1.3)"/>
<path d="M658.3 527.5 L675.4 535.0" stroke="#b09a77" stroke-width="8.5" fill="none" stroke-linecap="round" stroke-linejoin="round"/>
<path d="M658.3 527.5 L675.4 535.0" stroke="#e6d0a6" stroke-width="6.1" fill="none" stroke-linecap="round" stroke-linejoin="round" transform="translate(-0.5,-0.7)"/>
<path d="M658.3 527.5 L675.4 535.0" stroke="#f9e8c6" stroke-width="2.5" fill="none" stroke-linecap="round" stroke-linejoin="round" transform="translate(-1.0,-1.3)"/>
<path d="M675.4 535.0 L716.7 552.5" stroke="#b09a77" stroke-width="8.5" fill="none" stroke-linecap="round" stroke-linejoin="round"/>
<path d="M675.4 535.0 L716.7 552.5" stroke="#e6d0a6" stroke-width="6.1" fill="none" stroke-linecap="round" stroke-linejoin="round" transform="translate(-0.5,-0.7)"/>
<path d="M675.4 535.0 L716.7 552.5" stroke="#f9e8c6" stroke-width="2.5" fill="none" stroke-linecap="round" stroke-linejoin="round" transform="translate(-1.0,-1.3)"/>
<path d="M660.0 492.5 L658.3 528.3" stroke="#b09a77" stroke-width="9.0" fill="none" stroke-linecap="round" stroke-linejoin="round"/>
<path d="M660.0 492.5 L658.3 528.3" stroke="#e6d0a6" stroke-width="6.5" fill="none" stroke-linecap="round" stroke-linejoin="round" transform="translate(-0.5,-0.7)"/>
<path d="M660.0 492.5 L658.3 528.3" stroke="#f9e8c6" stroke-width="2.7" fill="none" stroke-linecap="round" stroke-linejoin="round" transform="translate(-1.1,-1.3)"/>
<path d="M654.4 482.5 L660.0 491.9 L656.2 492.5 Z" fill="#cfc7b0" />
<path d="M654.2 533.3 L666.7 540.0" stroke="#b09a77" stroke-width="9.0" fill="none" stroke-linecap="round" stroke-linejoin="round"/>
<path d="M654.2 533.3 L666.7 540.0" stroke="#e6d0a6" stroke-width="6.5" fill="none" stroke-linecap="round" stroke-linejoin="round" transform="translate(-0.5,-0.7)"/>
<path d="M654.2 533.3 L666.7 540.0" stroke="#f9e8c6" stroke-width="2.7" fill="none" stroke-linecap="round" stroke-linejoin="round" transform="translate(-1.1,-1.3)"/>
<path d="M701.7 553.3 L710.4 556.7" stroke="#b80000" stroke-width="9.5" fill="none" stroke-linecap="round" stroke-linejoin="round"/>
<path d="M701.7 553.3 L710.4 556.7" stroke="#f50f0f" stroke-width="6.8" fill="none" stroke-linecap="round" stroke-linejoin="round" transform="translate(-0.6,-0.8)"/>
<path d="M701.7 553.3 L710.4 556.7" stroke="#ff4030" stroke-width="2.9" fill="none" stroke-linecap="round" stroke-linejoin="round" transform="translate(-1.1,-1.4)"/>
<path d="M666.7 540.0 L701.7 553.3" stroke="#b09a77" stroke-width="9.5" fill="none" stroke-linecap="butt" stroke-linejoin="round"/>
<path d="M666.7 540.0 L701.7 553.3" stroke="#e6d0a6" stroke-width="6.8" fill="none" stroke-linecap="butt" stroke-linejoin="round" transform="translate(-0.6,-0.8)"/>
<path d="M666.7 540.0 L701.7 553.3" stroke="#f9e8c6" stroke-width="2.9" fill="none" stroke-linecap="butt" stroke-linejoin="round" transform="translate(-1.1,-1.4)"/>
<path d="M666.7 540.0 L667.0 540.1" stroke="#b09a77" stroke-width="9.5" fill="none" stroke-linecap="round" stroke-linejoin="round"/>
<path d="M666.7 540.0 L667.0 540.1" stroke="#e6d0a6" stroke-width="6.8" fill="none" stroke-linecap="round" stroke-linejoin="round" transform="translate(-0.6,-0.8)"/>
<path d="M666.7 540.0 L667.0 540.1" stroke="#f9e8c6" stroke-width="2.9" fill="none" stroke-linecap="round" stroke-linejoin="round" transform="translate(-1.1,-1.4)"/>
<path d="M727.5 531.2 L748.1 533.8 L751.9 533.8 L770.6 536.9 L763.8 555.0 L760.0 567.5 L752.5 586.2 L745.0 602.5 L735.0 613.8 L726.2 625.0 L725.0 635.0 L697.5 625.0 L702.5 598.8 L713.8 573.8 L718.8 555.0 L722.5 548.8 Z" fill="url(#g4)" />
<path d="M759.0 570.0 C759.1 571.5 758.0 575.6 756.7 579.2 C755.3 582.8 753.6 586.9 750.8 591.7 C748.1 596.5 743.8 602.6 740.0 607.9 C736.2 613.2 730.7 619.9 728.3 623.3 C726.0 626.7 726.5 628.3 726.0 628.3 C725.5 628.3 723.4 626.9 725.2 623.3 C726.9 619.7 732.9 612.1 736.7 606.7 C740.4 601.2 744.7 595.4 747.5 590.8 C750.3 586.2 751.9 582.6 753.3 579.2 C754.8 575.7 755.1 571.5 756.0 570.0 C756.9 568.5 758.9 568.5 759.0 570.0 Z" fill="#5e5140" />
<path d="M747.5 530.0 C748.8 527.5 751.7 519.4 755.0 515.0 C758.3 510.6 762.7 508.5 767.5 503.8 C772.3 499.0 777.5 492.3 783.8 486.2 C790.0 480.2 798.3 472.4 805.0 467.5 C811.7 462.6 817.5 459.3 823.8 456.9 C830.0 454.5 836.2 453.6 842.5 453.1 C848.8 452.6 855.0 452.4 861.2 453.8 C867.5 455.1 874.8 458.1 880.0 461.2 C885.2 464.4 889.4 468.3 892.5 472.5 C895.6 476.7 897.7 481.7 898.8 486.2 C899.8 490.8 899.8 494.8 898.8 500.0 C897.7 505.2 895.6 511.0 892.5 517.5 C889.4 524.0 884.2 532.5 880.0 538.8 C875.8 545.0 870.0 551.5 867.5 555.0 C865.0 558.5 867.7 557.3 865.0 560.0 C862.3 562.7 854.6 568.5 851.2 571.2 C847.9 574.0 846.0 575.4 845.0 576.2" stroke="#b09a77" stroke-width="8.0" fill="none" stroke-linecap="round" stroke-linejoin="round"/>
<path d="M747.5 530.0 C748.8 527.5 751.7 519.4 755.0 515.0 C758.3 510.6 762.7 508.5 767.5 503.8 C772.3 499.0 777.5 492.3 783.8 486.2 C790.0 480.2 798.3 472.4 805.0 467.5 C811.7 462.6 817.5 459.3 823.8 456.9 C830.0 454.5 836.2 453.6 842.5 453.1 C848.8 452.6 855.0 452.4 861.2 453.8 C867.5 455.1 874.8 458.1 880.0 461.2 C885.2 464.4 889.4 468.3 892.5 472.5 C895.6 476.7 897.7 481.7 898.8 486.2 C899.8 490.8 899.8 494.8 898.8 500.0 C897.7 505.2 895.6 511.0 892.5 517.5 C889.4 524.0 884.2 532.5 880.0 538.8 C875.8 545.0 870.0 551.5 867.5 555.0 C865.0 558.5 867.7 557.3 865.0 560.0 C862.3 562.7 854.6 568.5 851.2 571.2 C847.9 574.0 846.0 575.4 845.0 576.2" stroke="#e6d0a6" stroke-width="5.8" fill="none" stroke-linecap="round" stroke-linejoin="round" transform="translate(-0.5,-0.6)"/>
<path d="M747.5 530.0 C748.8 527.5 751.7 519.4 755.0 515.0 C758.3 510.6 762.7 508.5 767.5 503.8 C772.3 499.0 777.5 492.3 783.8 486.2 C790.0 480.2 798.3 472.4 805.0 467.5 C811.7 462.6 817.5 459.3 823.8 456.9 C830.0 454.5 836.2 453.6 842.5 453.1 C848.8 452.6 855.0 452.4 861.2 453.8 C867.5 455.1 874.8 458.1 880.0 461.2 C885.2 464.4 889.4 468.3 892.5 472.5 C895.6 476.7 897.7 481.7 898.8 486.2 C899.8 490.8 899.8 494.8 898.8 500.0 C897.7 505.2 895.6 511.0 892.5 517.5 C889.4 524.0 884.2 532.5 880.0 538.8 C875.8 545.0 870.0 551.5 867.5 555.0 C865.0 558.5 867.7 557.3 865.0 560.0 C862.3 562.7 854.6 568.5 851.2 571.2 C847.9 574.0 846.0 575.4 845.0 576.2" stroke="#f9e8c6" stroke-width="2.4" fill="none" stroke-linecap="round" stroke-linejoin="round" transform="translate(-1.0,-1.2)"/>
<path d="M728.8 523.1 L746.2 525.6 L748.1 533.8 L727.5 531.2 Z" fill="#f6dfb6" />
<path d="M756.2 527.5 L770.6 529.4 L770.6 536.9 L751.9 533.8 Z" fill="#f6dfb6" />
<path d="M755.0 482.5 L772.5 501.2" stroke="#6e5f4a" stroke-width="8.5" fill="none" stroke-linecap="round" stroke-linejoin="round"/>
<path d="M755.0 482.5 L772.5 501.2" stroke="#9d8a6b" stroke-width="6.1" fill="none" stroke-linecap="round" stroke-linejoin="round" transform="translate(-0.5,-0.7)"/>
<path d="M755.0 482.5 L772.5 501.2" stroke="#b5a07e" stroke-width="2.5" fill="none" stroke-linecap="round" stroke-linejoin="round" transform="translate(-1.0,-1.3)"/>
<path d="M755.0 482.5 L773.8 475.6" stroke="#b09a77" stroke-width="8.5" fill="none" stroke-linecap="round" stroke-linejoin="round"/>
<path d="M755.0 482.5 L773.8 475.6" stroke="#e6d0a6" stroke-width="6.1" fill="none" stroke-linecap="round" stroke-linejoin="round" transform="translate(-0.5,-0.7)"/>
<path d="M755.0 482.5 L773.8 475.6" stroke="#f9e8c6" stroke-width="2.5" fill="none" stroke-linecap="round" stroke-linejoin="round" transform="translate(-1.0,-1.3)"/>
<path d="M773.8 475.6 L781.9 503.8" stroke="#b09a77" stroke-width="8.5" fill="none" stroke-linecap="round" stroke-linejoin="round"/>
<path d="M773.8 475.6 L781.9 503.8" stroke="#e6d0a6" stroke-width="6.1" fill="none" stroke-linecap="round" stroke-linejoin="round" transform="translate(-0.5,-0.7)"/>
<path d="M773.8 475.6 L781.9 503.8" stroke="#f9e8c6" stroke-width="2.5" fill="none" stroke-linecap="round" stroke-linejoin="round" transform="translate(-1.0,-1.3)"/>
<path d="M781.9 503.8 L805.6 496.2" stroke="#b09a77" stroke-width="8.5" fill="none" stroke-linecap="round" stroke-linejoin="round"/>
<path d="M781.9 503.8 L805.6 496.2" stroke="#e6d0a6" stroke-width="6.1" fill="none" stroke-linecap="round" stroke-linejoin="round" transform="translate(-0.5,-0.7)"/>
<path d="M781.9 503.8 L805.6 496.2" stroke="#f9e8c6" stroke-width="2.5" fill="none" stroke-linecap="round" stroke-linejoin="round" transform="translate(-1.0,-1.3)"/>
<path d="M811.0 510.3 L817.5 527.5" stroke="#1d3aa8" stroke-width="8.5" fill="none" stroke-linecap="round" stroke-linejoin="round"/>
<path d="M811.0 510.3 L817.5 527.5" stroke="#3362e8" stroke-width="6.1" fill="none" stroke-linecap="round" stroke-linejoin="round" transform="translate(-0.5,-0.7)"/>
<path d="M811.0 510.3 L817.5 527.5" stroke="#6d95ff" stroke-width="2.5" fill="none" stroke-linecap="round" stroke-linejoin="round" transform="translate(-1.0,-1.3)"/>
<path d="M805.6 496.2 L811.0 510.3" stroke="#b09a77" stroke-width="8.5" fill="none" stroke-linecap="butt" stroke-linejoin="round"/>
<path d="M805.6 496.2 L811.0 510.3" stroke="#e6d0a6" stroke-width="6.1" fill="none" stroke-linecap="butt" stroke-linejoin="round" transform="translate(-0.5,-0.7)"/>
<path d="M805.6 496.2 L811.0 510.3" stroke="#f9e8c6" stroke-width="2.5" fill="none" stroke-linecap="butt" stroke-linejoin="round" transform="translate(-1.0,-1.3)"/>
<path d="M805.6 496.2 L805.7 496.4" stroke="#b09a77" stroke-width="8.5" fill="none" stroke-linecap="round" stroke-linejoin="round"/>
<path d="M805.6 496.2 L805.7 496.4" stroke="#e6d0a6" stroke-width="6.1" fill="none" stroke-linecap="round" stroke-linejoin="round" transform="translate(-0.5,-0.7)"/>
<path d="M805.6 496.2 L805.7 496.4" stroke="#f9e8c6" stroke-width="2.5" fill="none" stroke-linecap="round" stroke-linejoin="round" transform="translate(-1.0,-1.3)"/>
<circle cx="779.4" cy="535.6" r="4.7" fill="url(#g5)"/>
<path d="M768.8 543.8 L785.0 555.0" stroke="#6e5f4a" stroke-width="8.5" fill="none" stroke-linecap="round" stroke-linejoin="round"/>
<path d="M768.8 543.8 L785.0 555.0" stroke="#9d8a6b" stroke-width="6.1" fill="none" stroke-linecap="round" stroke-linejoin="round" transform="translate(-0.5,-0.7)"/>
<path d="M768.8 543.8 L785.0 555.0" stroke="#b5a07e" stroke-width="2.5" fill="none" stroke-linecap="round" stroke-linejoin="round" transform="translate(-1.0,-1.3)"/>
<path d="M792.6 547.1 L803.1 536.2" stroke="#700000" stroke-width="8.5" fill="none" stroke-linecap="round" stroke-linejoin="round"/>
<path d="M792.6 547.1 L803.1 536.2" stroke="#c60808" stroke-width="6.1" fill="none" stroke-linecap="round" stroke-linejoin="round" transform="translate(-0.5,-0.7)"/>
<path d="M792.6 547.1 L803.1 536.2" stroke="#e02a20" stroke-width="2.5" fill="none" stroke-linecap="round" stroke-linejoin="round" transform="translate(-1.0,-1.3)"/>
<path d="M785.0 555.0 L792.6 547.1" stroke="#6e5f4a" stroke-width="8.5" fill="none" stroke-linecap="butt" stroke-linejoin="round"/>
<path d="M785.0 555.0 L792.6 547.1" stroke="#9d8a6b" stroke-width="6.1" fill="none" stroke-linecap="butt" stroke-linejoin="round" transform="translate(-0.5,-0.7)"/>
<path d="M785.0 555.0 L792.6 547.1" stroke="#b5a07e" stroke-width="2.5" fill="none" stroke-linecap="butt" stroke-linejoin="round" transform="translate(-1.0,-1.3)"/>
<path d="M785.0 555.0 L785.1 554.9" stroke="#6e5f4a" stroke-width="8.5" fill="none" stroke-linecap="round" stroke-linejoin="round"/>
<path d="M785.0 555.0 L785.1 554.9" stroke="#9d8a6b" stroke-width="6.1" fill="none" stroke-linecap="round" stroke-linejoin="round" transform="translate(-0.5,-0.7)"/>
<path d="M785.0 555.0 L785.1 554.9" stroke="#b5a07e" stroke-width="2.5" fill="none" stroke-linecap="round" stroke-linejoin="round" transform="translate(-1.0,-1.3)"/>
<path d="M785.0 555.0 L780.0 560.0" stroke="#6e5f4a" stroke-width="8.0" fill="none" stroke-linecap="round" stroke-linejoin="round"/>
<path d="M785.0 555.0 L780.0 560.0" stroke="#9d8a6b" stroke-width="5.8" fill="none" stroke-linecap="round" stroke-linejoin="round" transform="translate(-0.5,-0.6)"/>
<path d="M785.0 555.0 L780.0 560.0" stroke="#b5a07e" stroke-width="2.4" fill="none" stroke-linecap="round" stroke-linejoin="round" transform="translate(-1.0,-1.2)"/>
<path d="M497.0 720.0 C499.3 719.6 506.2 718.9 511.0 717.5 C515.8 716.1 523.5 712.5 526.0 711.5" stroke="#6e5f4a" stroke-width="6.0" fill="none" stroke-linecap="round" stroke-linejoin="round"/>
<path d="M497.0 720.0 C499.3 719.6 506.2 718.9 511.0 717.5 C515.8 716.1 523.5 712.5 526.0 711.5" stroke="#9d8a6b" stroke-width="4.3" fill="none" stroke-linecap="round" stroke-linejoin="round" transform="translate(-0.4,-0.5)"/>
<path d="M497.0 720.0 C499.3 719.6 506.2 718.9 511.0 717.5 C515.8 716.1 523.5 712.5 526.0 711.5" stroke="#b5a07e" stroke-width="1.8" fill="none" stroke-linecap="round" stroke-linejoin="round" transform="translate(-0.7,-0.9)"/>
<path d="M551.0 701.7 C552.5 701.3 557.0 699.4 560.0 699.4 C563.0 699.4 566.4 700.0 569.0 701.7 C571.6 703.4 574.0 707.4 575.5 709.4 C577.0 711.4 576.8 711.9 578.0 714.0 C579.2 716.1 581.0 719.3 583.0 722.0 C585.0 724.7 588.8 728.7 590.0 730.0" stroke="#9c8868" stroke-width="6.5" fill="none" stroke-linecap="round" stroke-linejoin="round"/>
<path d="M551.0 701.7 C552.5 701.3 557.0 699.4 560.0 699.4 C563.0 699.4 566.4 700.0 569.0 701.7 C571.6 703.4 574.0 707.4 575.5 709.4 C577.0 711.4 576.8 711.9 578.0 714.0 C579.2 716.1 581.0 719.3 583.0 722.0 C585.0 724.7 588.8 728.7 590.0 730.0" stroke="#cdb790" stroke-width="4.7" fill="none" stroke-linecap="round" stroke-linejoin="round" transform="translate(-0.4,-0.5)"/>
<path d="M551.0 701.7 C552.5 701.3 557.0 699.4 560.0 699.4 C563.0 699.4 566.4 700.0 569.0 701.7 C571.6 703.4 574.0 707.4 575.5 709.4 C577.0 711.4 576.8 711.9 578.0 714.0 C579.2 716.1 581.0 719.3 583.0 722.0 C585.0 724.7 588.8 728.7 590.0 730.0" stroke="#e0caa2" stroke-width="1.9" fill="none" stroke-linecap="round" stroke-linejoin="round" transform="translate(-0.8,-1.0)"/>
<path d="M462.2 667.9 C464.2 666.3 472.0 664.9 473.5 666.7 C475.0 668.6 472.4 676.2 471.4 679.1 C470.3 682.0 468.8 684.5 467.2 684.0 C465.5 683.6 462.3 679.0 461.5 676.3 C460.7 673.6 460.2 669.5 462.2 667.9 Z" fill="#7d6c54" />
<path d="M466.5 665.7 C463.4 666.3 453.5 666.8 448.2 669.3 C442.8 671.7 437.5 675.6 434.1 680.5 C430.7 685.5 428.7 692.0 427.7 698.8 C426.8 705.6 426.7 714.5 428.4 721.4 C430.2 728.2 433.8 734.5 438.3 739.7 C442.8 744.8 448.4 749.5 455.2 752.3 C462.0 755.1 471.8 756.1 479.1 756.5 C486.4 757.0 492.3 756.3 498.8 755.1 C505.4 754.0 512.9 751.4 518.5 749.5 C524.2 747.6 530.3 744.8 532.6 743.9 L529.8 738.2 C527.7 739.2 522.3 742.1 517.1 743.9 C512.0 745.6 505.6 748.3 498.8 748.8 C492.0 749.3 483.3 749.2 476.3 746.7 C469.3 744.2 461.9 738.7 456.6 734.0 C451.3 729.3 447.1 723.9 444.6 718.5 C442.2 713.1 441.2 707.0 441.8 701.6 C442.4 696.2 445.2 690.6 448.2 686.2 C451.1 681.7 455.4 678.0 459.4 674.9 C463.4 671.8 470.2 668.6 472.4 667.3 Z" fill="url(#g6)"/>
<path d="M472.4 667.3 C470.2 668.6 463.4 671.8 459.4 674.9 C455.4 678.0 451.1 681.7 448.2 686.2 C445.2 690.6 442.4 696.2 441.8 701.6 C441.2 707.0 442.2 713.1 444.6 718.5 C447.1 723.9 451.3 729.3 456.6 734.0 C461.9 738.7 469.3 744.2 476.3 746.7 C483.3 749.2 492.0 749.3 498.8 748.8 C505.6 748.3 512.0 745.6 517.1 743.9 C522.3 742.1 527.7 739.2 529.8 738.2" fill="none" stroke="#fff0d0" stroke-width="0.9" stroke-opacity="0.8"/>
<path d="M504.5 652.1 C506.5 650.2 508.4 649.7 511.5 649.6 C514.5 649.4 520.2 649.1 522.8 651.2 C525.3 653.4 527.7 660.1 527.0 662.2 C526.3 664.3 521.8 664.2 518.5 663.9 C515.3 663.6 510.4 660.7 507.3 660.3 C504.1 659.8 500.0 662.5 499.5 661.1 C499.1 659.7 502.5 654.0 504.5 652.1 Z" fill="url(#g7)"/>
<path d="M511.5 649.6 C508.4 650.3 498.6 651.4 493.2 653.8 C487.8 656.1 483.1 659.4 479.1 663.6 C475.1 667.9 471.3 673.3 469.3 679.1 C467.3 685.0 466.2 692.3 467.2 698.8 C468.1 705.4 471.5 712.7 474.9 718.5 C478.3 724.4 482.2 729.8 487.6 734.0 C493.0 738.2 499.8 741.8 507.3 743.9 C514.8 746.0 523.2 747.4 532.6 746.7 C542.0 746.0 556.5 741.4 563.6 739.7 C570.6 737.9 573.0 736.7 574.8 736.1 L572.0 728.4 C570.2 729.2 566.2 731.6 560.8 733.3 C555.4 735.1 547.2 738.8 539.7 738.9 C532.1 739.1 522.5 736.7 515.7 734.0 C508.9 731.3 503.1 727.2 498.8 722.8 C494.6 718.3 492.1 712.7 490.4 707.3 C488.6 701.9 488.4 695.5 488.3 690.4 C488.2 685.2 488.4 681.0 489.7 676.3 C491.0 671.6 493.6 666.3 496.0 662.2 C498.5 658.2 503.1 653.8 504.5 652.1 Z" fill="url(#g8)"/>
<path d="M504.5 652.1 C503.1 653.8 498.5 658.2 496.0 662.2 C493.6 666.3 491.0 671.6 489.7 676.3 C488.4 681.0 488.2 685.2 488.3 690.4 C488.4 695.5 488.6 701.9 490.4 707.3 C492.1 712.7 494.6 718.3 498.8 722.8 C503.1 727.2 508.9 731.3 515.7 734.0 C522.5 736.7 532.1 739.1 539.7 738.9 C547.2 738.8 555.4 735.1 560.8 733.3 C566.2 731.6 570.2 729.2 572.0 728.4" fill="none" stroke="#fff0d0" stroke-width="0.9" stroke-opacity="0.8"/>
<path d="M528.4 710.1 L524.9 721.4 L522.1 734.0 L532.6 741.1 L542.5 731.2 L535.4 721.4 Z" fill="url(#g9)" />
<path d="M545.3 647.4 C545.3 649.8 554.2 649.5 557.8 651.7 C561.4 653.9 564.1 656.6 566.7 660.5 C569.3 664.4 571.4 669.9 573.3 675.0 C575.1 680.2 577.0 687.0 577.8 691.6 C578.5 696.3 578.3 698.8 577.8 702.8 C577.3 706.8 575.6 711.7 574.8 715.7 C574.1 719.8 572.7 724.2 573.4 727.0 C574.1 729.8 576.5 731.9 579.1 732.6 C581.6 733.3 586.5 733.6 588.9 731.2 C591.4 728.9 593.2 722.5 593.8 718.5 C594.5 714.5 594.2 711.8 592.9 707.3 C591.5 702.8 587.7 697.0 585.5 691.6 C583.4 686.3 581.2 680.6 580.1 675.0 C578.9 669.5 578.6 663.7 578.4 658.3 C578.1 652.9 580.1 646.0 578.4 642.8 C576.6 639.6 571.2 639.9 567.8 639.0 C564.4 638.1 561.7 636.2 558.0 637.6 C554.2 639.0 545.3 645.1 545.3 647.4 Z" fill="url(#g10)"/>
<path d="M558.0 637.6 C554.9 638.2 545.0 638.9 539.7 641.1 C534.3 643.3 529.6 647.0 525.6 651.0 C521.6 655.0 517.8 659.6 515.7 665.0 C513.6 670.4 512.4 677.2 512.9 683.3 C513.4 689.4 515.7 695.8 518.5 701.6 C521.4 707.5 525.1 713.6 529.8 718.5 C534.5 723.5 540.4 727.9 546.7 731.2 C553.0 734.5 559.6 736.8 567.8 738.2 C576.0 739.7 586.8 741.5 596.0 739.7 C605.1 737.8 618.2 729.1 622.7 727.0 L619.9 717.1 C618.0 718.2 612.9 721.6 608.6 723.5 C604.4 725.3 599.2 727.1 594.4 728.1 C589.6 729.1 584.3 729.7 580.1 729.4 C575.8 729.0 572.6 728.0 568.9 726.1 C565.2 724.3 561.2 721.4 557.8 718.3 C554.5 715.1 551.6 711.7 548.8 707.3 C546.0 702.9 543.1 696.6 541.1 691.8 C539.0 687.0 537.6 682.5 536.7 678.4 C535.8 674.3 535.5 671.3 535.7 667.2 C535.9 663.1 536.5 657.4 538.0 653.8 C539.4 650.1 542.4 647.3 544.6 645.3 C546.7 643.3 549.9 642.4 550.9 641.8 Z" fill="url(#g11)"/>
<path d="M550.9 641.8 C549.9 642.4 546.7 643.3 544.6 645.3 C542.4 647.3 539.4 650.1 538.0 653.8 C536.5 657.4 535.9 663.1 535.7 667.2 C535.5 671.3 535.8 674.3 536.7 678.4 C537.6 682.5 539.0 687.0 541.1 691.8 C543.1 696.6 546.0 702.9 548.8 707.3 C551.6 711.7 554.5 715.1 557.8 718.3 C561.2 721.4 565.2 724.3 568.9 726.1 C572.6 728.0 575.8 729.0 580.1 729.4 C584.3 729.7 589.6 729.1 594.4 728.1 C599.2 727.1 604.4 725.3 608.6 723.5 C612.9 721.6 618.0 718.2 619.9 717.1" fill="none" stroke="#fff0d0" stroke-width="0.9" stroke-opacity="0.8"/>
<path d="M608.3 641.7 C606.9 638.1 614.3 636.2 616.7 633.3 C619.0 630.4 619.2 625.1 622.5 624.2 C625.8 623.2 632.6 624.9 636.7 627.5 C640.7 630.1 644.2 635.4 646.7 640.0 C649.2 644.6 650.7 649.2 651.7 655.0 C652.6 660.8 652.8 668.6 652.5 675.0 C652.2 681.4 651.8 687.2 650.0 693.3 C648.2 699.4 644.4 707.2 641.7 711.7 C638.9 716.1 636.9 720.8 633.3 720.0 C629.7 719.2 621.1 710.3 620.0 706.7 C618.9 703.1 624.9 701.1 626.7 698.3 C628.4 695.6 629.5 693.9 630.3 690.0 C631.2 686.1 632.6 680.8 631.7 675.0 C630.8 669.2 628.9 660.6 625.0 655.0 C621.1 649.4 609.7 645.3 608.3 641.7 Z" fill="url(#g12)"/>
<path d="M622.7 624.2 C619.4 624.9 608.6 626.3 603.0 628.4 C597.4 630.6 592.9 633.1 588.9 636.9 C584.9 640.6 580.9 645.6 579.1 651.0 C577.2 656.4 576.7 662.7 577.7 669.3 C578.6 675.8 581.4 684.0 584.7 690.4 C588.0 696.7 592.0 702.1 597.4 707.3 C602.8 712.4 610.0 717.8 617.1 721.4 C624.1 724.9 631.4 727.2 639.6 728.4 C647.8 729.6 659.8 729.0 666.3 728.4 C672.9 727.8 673.6 727.2 678.8 725.0 C684.0 722.8 692.3 719.2 697.5 715.0 C702.7 710.8 706.2 706.2 710.0 700.0 C713.8 693.8 717.5 685.4 720.0 677.5 C722.5 669.6 724.1 660.4 725.0 652.5 C725.9 644.6 726.3 636.2 725.5 630.0 C724.7 623.8 723.2 619.4 720.0 615.0 C716.8 610.6 712.5 606.7 706.2 603.8 C700.0 600.9 686.5 598.5 682.5 597.5 L688.8 632.0 C688.8 633.3 688.8 636.6 689.0 640.0 C689.2 643.4 689.6 646.2 690.0 652.5 C690.4 658.8 691.4 670.8 691.2 677.5 C691.0 684.2 690.2 687.5 688.8 692.5 C687.3 697.5 685.2 703.5 682.5 707.5 C679.8 711.5 676.2 714.1 672.5 716.2 C668.8 718.3 664.2 720.0 660.0 720.0 C655.8 720.0 652.5 718.5 647.5 716.2 C642.5 713.9 632.9 708.1 630.0 706.2 C627.1 704.3 631.7 706.3 630.0 705.0 C628.3 703.7 623.6 701.4 620.0 698.3 C616.4 695.3 611.5 691.9 608.3 686.7 C605.1 681.4 601.5 673.1 600.8 666.7 C600.1 660.3 602.4 653.5 604.2 648.3 C606.0 643.2 609.2 639.2 611.7 635.8 C614.2 632.5 617.9 629.6 619.2 628.3 Z" fill="url(#g13)"/>
<path d="M688.5 632.0 L692.5 628.5 L703.3 627.3 L715.8 628.0 L726.5 630.5 L726.3 654.0 L690.0 654.0 Z" fill="url(#g14)" />
<path d="M683.3 597.5 C685.3 596.3 691.8 598.4 695.0 599.2 C698.2 599.9 704.4 601.7 707.5 603.3 C710.6 605.0 716.1 609.2 718.3 611.7 C720.6 614.1 723.1 619.1 724.2 621.7 C725.2 624.2 727.4 629.9 726.2 630.8 C725.1 631.7 718.9 628.8 715.8 628.3 C712.8 627.9 706.4 627.4 703.3 627.5 C700.2 627.6 694.4 628.2 692.5 628.8 C690.6 629.3 689.6 630.9 688.8 631.7 C687.9 632.4 686.8 634.6 685.8 634.2 C684.9 633.7 682.7 630.4 681.7 628.3 C680.7 626.2 678.6 621.0 678.3 618.3 C678.1 615.7 679.3 611.1 680.0 608.3 C680.7 605.6 681.3 598.7 683.3 597.5 Z" fill="url(#g15)"/>
<path d="M683.3 597.5 C685.3 596.3 691.8 598.4 695.0 599.2 C698.2 599.9 704.4 601.7 707.5 603.3 C710.6 605.0 716.1 609.2 718.3 611.7 C720.6 614.1 723.1 619.1 724.2 621.7 C725.2 624.2 727.4 629.9 726.2 630.8 C725.1 631.7 718.9 628.8 715.8 628.3 C712.8 627.9 706.4 627.4 703.3 627.5 C700.2 627.6 694.4 628.2 692.5 628.8 C690.6 629.3 689.6 630.9 688.8 631.7 C687.9 632.4 686.8 634.6 685.8 634.2 C684.9 633.7 682.7 630.4 681.7 628.3 C680.7 626.2 678.6 621.0 678.3 618.3 C678.1 615.7 679.3 611.1 680.0 608.3 C680.7 605.6 681.3 598.7 683.3 597.5 Z" fill="url(#g16)"/>
<path d="M674.2 605.8 L683.3 597.5 L682.3 607.5 L678.3 617.1 Z" fill="#f4deb4" />
<path d="M665.0 639.2 L667.9 628.3 L671.2 621.7 L677.7 633.8 L670.0 636.7 Z" fill="#f4deb4" />
<path d="M619.2 628.3 C617.9 629.6 614.2 632.5 611.7 635.8 C609.2 639.2 606.0 643.2 604.2 648.3 C602.4 653.5 600.1 660.3 600.8 666.7 C601.5 673.1 605.1 681.4 608.3 686.7 C611.5 691.9 616.4 695.3 620.0 698.3 C623.6 701.4 628.3 703.7 630.0 705.0 C631.7 706.3 627.1 704.3 630.0 706.2 C632.9 708.1 642.5 713.9 647.5 716.2 C652.5 718.5 655.8 720.0 660.0 720.0 C664.2 720.0 668.8 718.3 672.5 716.2 C676.2 714.1 680.8 709.0 682.5 707.5" fill="none" stroke="#fff0d0" stroke-width="0.9" stroke-opacity="0.8"/>
<path d="M798.1 570.6 L820.0 565.0 L841.2 568.8 L845.0 576.2 L855.0 587.5 L860.0 601.2 L871.2 618.8 L851.2 608.1 L841.2 625.0 L828.8 645.0 L813.8 667.5 L811.9 670.0 L795.0 692.5 L772.5 716.2 L760.0 732.5 L750.0 745.0 L737.5 752.5 L731.2 750.0 L734.4 712.5 L740.0 710.0 L747.5 688.8 L757.5 670.0 L766.2 661.2 L782.5 640.0 L791.2 625.0 L808.8 620.0 L801.2 607.5 L807.5 598.8 L815.0 584.4 Z" fill="url(#g17)" />
<path d="M731.2 750.0 L737.5 752.5 L755.0 741.2 L763.8 730.0 L747.5 740.0 L735.0 745.0 Z" fill="#8a7860" />
<path d="M688.8 730.0 C692.3 730.0 702.7 729.2 710.0 729.8 C717.3 730.3 728.8 732.9 732.5 733.5" stroke="#9c8868" stroke-width="6.5" fill="none" stroke-linecap="round" stroke-linejoin="round"/>
<path d="M688.8 730.0 C692.3 730.0 702.7 729.2 710.0 729.8 C717.3 730.3 728.8 732.9 732.5 733.5" stroke="#cbb58e" stroke-width="4.7" fill="none" stroke-linecap="round" stroke-linejoin="round" transform="translate(-0.4,-0.5)"/>
<path d="M688.8 730.0 C692.3 730.0 702.7 729.2 710.0 729.8 C717.3 730.3 728.8 732.9 732.5 733.5" stroke="#dcc6a0" stroke-width="1.9" fill="none" stroke-linecap="round" stroke-linejoin="round" transform="translate(-0.8,-1.0)"/>
<path d="M783.8 578.1 L785.0 587.8" stroke="#700000" stroke-width="8.0" fill="none" stroke-linecap="round" stroke-linejoin="round"/>
<path d="M783.8 578.1 L785.0 587.8" stroke="#c60808" stroke-width="5.8" fill="none" stroke-linecap="round" stroke-linejoin="round" transform="translate(-0.5,-0.6)"/>
<path d="M783.8 578.1 L785.0 587.8" stroke="#e02a20" stroke-width="2.4" fill="none" stroke-linecap="round" stroke-linejoin="round" transform="translate(-1.0,-1.2)"/>
<path d="M766.2 588.8 L780.0 598.8" stroke="#b09a77" stroke-width="8.5" fill="none" stroke-linecap="round" stroke-linejoin="round"/>
<path d="M766.2 588.8 L780.0 598.8" stroke="#e6d0a6" stroke-width="6.1" fill="none" stroke-linecap="round" stroke-linejoin="round" transform="translate(-0.5,-0.7)"/>
<path d="M766.2 588.8 L780.0 598.8" stroke="#f9e8c6" stroke-width="2.5" fill="none" stroke-linecap="round" stroke-linejoin="round" transform="translate(-1.0,-1.3)"/>
<path d="M780.0 607.5 L791.2 628.8" stroke="#b09a77" stroke-width="8.5" fill="none" stroke-linecap="round" stroke-linejoin="round"/>
<path d="M780.0 607.5 L791.2 628.8" stroke="#e6d0a6" stroke-width="6.1" fill="none" stroke-linecap="round" stroke-linejoin="round" transform="translate(-0.5,-0.7)"/>
<path d="M780.0 607.5 L791.2 628.8" stroke="#f9e8c6" stroke-width="2.5" fill="none" stroke-linecap="round" stroke-linejoin="round" transform="translate(-1.0,-1.3)"/>
<path d="M791.2 628.8 L801.2 635.0" stroke="#b09a77" stroke-width="8.5" fill="none" stroke-linecap="round" stroke-linejoin="round"/>
<path d="M791.2 628.8 L801.2 635.0" stroke="#e6d0a6" stroke-width="6.1" fill="none" stroke-linecap="round" stroke-linejoin="round" transform="translate(-0.5,-0.7)"/>
<path d="M791.2 628.8 L801.2 635.0" stroke="#f9e8c6" stroke-width="2.5" fill="none" stroke-linecap="round" stroke-linejoin="round" transform="translate(-1.0,-1.3)"/>
<path d="M801.2 635.0 L808.1 625.0" stroke="#6e5f4a" stroke-width="8.5" fill="none" stroke-linecap="round" stroke-linejoin="round"/>
<path d="M801.2 635.0 L808.1 625.0" stroke="#9d8a6b" stroke-width="6.1" fill="none" stroke-linecap="round" stroke-linejoin="round" transform="translate(-0.5,-0.7)"/>
<path d="M801.2 635.0 L808.1 625.0" stroke="#b5a07e" stroke-width="2.5" fill="none" stroke-linecap="round" stroke-linejoin="round" transform="translate(-1.0,-1.3)"/>
<path d="M792.5 635.0 L794.4 646.2" stroke="#6e5f4a" stroke-width="8.0" fill="none" stroke-linecap="round" stroke-linejoin="round"/>
<path d="M792.5 635.0 L794.4 646.2" stroke="#9d8a6b" stroke-width="5.8" fill="none" stroke-linecap="round" stroke-linejoin="round" transform="translate(-0.5,-0.6)"/>
<path d="M792.5 635.0 L794.4 646.2" stroke="#b5a07e" stroke-width="2.4" fill="none" stroke-linecap="round" stroke-linejoin="round" transform="translate(-1.0,-1.2)"/>
<path d="M792.5 610.0 L805.0 621.2" stroke="#700000" stroke-width="8.5" fill="none" stroke-linecap="round" stroke-linejoin="round"/>
<path d="M792.5 610.0 L805.0 621.2" stroke="#c60808" stroke-width="6.1" fill="none" stroke-linecap="round" stroke-linejoin="round" transform="translate(-0.5,-0.7)"/>
<path d="M792.5 610.0 L805.0 621.2" stroke="#e02a20" stroke-width="2.5" fill="none" stroke-linecap="round" stroke-linejoin="round" transform="translate(-1.0,-1.3)"/>
<path d="M780.0 598.8 L792.5 610.0" stroke="#8a5000" stroke-width="8.5" fill="none" stroke-linecap="butt" stroke-linejoin="round"/>
<path d="M780.0 598.8 L792.5 610.0" stroke="#d98206" stroke-width="6.1" fill="none" stroke-linecap="butt" stroke-linejoin="round" transform="translate(-0.5,-0.7)"/>
<path d="M780.0 598.8 L792.5 610.0" stroke="#f0a020" stroke-width="2.5" fill="none" stroke-linecap="butt" stroke-linejoin="round" transform="translate(-1.0,-1.3)"/>
<path d="M780.0 598.8 L780.1 598.9" stroke="#8a5000" stroke-width="8.5" fill="none" stroke-linecap="round" stroke-linejoin="round"/>
<path d="M780.0 598.8 L780.1 598.9" stroke="#d98206" stroke-width="6.1" fill="none" stroke-linecap="round" stroke-linejoin="round" transform="translate(-0.5,-0.7)"/>
<path d="M780.0 598.8 L780.1 598.9" stroke="#f0a020" stroke-width="2.5" fill="none" stroke-linecap="round" stroke-linejoin="round" transform="translate(-1.0,-1.3)"/>
<path d="M769.3 608.9 L756.2 621.2" stroke="#b80000" stroke-width="8.5" fill="none" stroke-linecap="round" stroke-linejoin="round"/>
<path d="M769.3 608.9 L756.2 621.2" stroke="#f50f0f" stroke-width="6.1" fill="none" stroke-linecap="round" stroke-linejoin="round" transform="translate(-0.5,-0.7)"/>
<path d="M769.3 608.9 L756.2 621.2" stroke="#ff4030" stroke-width="2.5" fill="none" stroke-linecap="round" stroke-linejoin="round" transform="translate(-1.0,-1.3)"/>
<path d="M780.0 598.8 L769.3 608.9" stroke="#a86400" stroke-width="8.5" fill="none" stroke-linecap="butt" stroke-linejoin="round"/>
<path d="M780.0 598.8 L769.3 608.9" stroke="#ff9c0a" stroke-width="6.1" fill="none" stroke-linecap="butt" stroke-linejoin="round" transform="translate(-0.5,-0.7)"/>
<path d="M780.0 598.8 L769.3 608.9" stroke="#ffc040" stroke-width="2.5" fill="none" stroke-linecap="butt" stroke-linejoin="round" transform="translate(-1.0,-1.3)"/>
<path d="M780.0 598.8 L779.9 598.9" stroke="#a86400" stroke-width="8.5" fill="none" stroke-linecap="round" stroke-linejoin="round"/>
<path d="M780.0 598.8 L779.9 598.9" stroke="#ff9c0a" stroke-width="6.1" fill="none" stroke-linecap="round" stroke-linejoin="round" transform="translate(-0.5,-0.7)"/>
<path d="M780.0 598.8 L779.9 598.9" stroke="#ffc040" stroke-width="2.5" fill="none" stroke-linecap="round" stroke-linejoin="round" transform="translate(-1.0,-1.3)"/>
<path d="M791.2 594.5 L805.0 589.4" stroke="#b80000" stroke-width="8.5" fill="none" stroke-linecap="round" stroke-linejoin="round"/>
<path d="M791.2 594.5 L805.0 589.4" stroke="#f50f0f" stroke-width="6.1" fill="none" stroke-linecap="round" stroke-linejoin="round" transform="translate(-0.5,-0.7)"/>
<path d="M791.2 594.5 L805.0 589.4" stroke="#ff4030" stroke-width="2.5" fill="none" stroke-linecap="round" stroke-linejoin="round" transform="translate(-1.0,-1.3)"/>
<path d="M780.0 598.8 L791.2 594.5" stroke="#a86400" stroke-width="8.5" fill="none" stroke-linecap="butt" stroke-linejoin="round"/>
<path d="M780.0 598.8 L791.2 594.5" stroke="#ff9c0a" stroke-width="6.1" fill="none" stroke-linecap="butt" stroke-linejoin="round" transform="translate(-0.5,-0.7)"/>
<path d="M780.0 598.8 L791.2 594.5" stroke="#ffc040" stroke-width="2.5" fill="none" stroke-linecap="butt" stroke-linejoin="round" transform="translate(-1.0,-1.3)"/>
<path d="M780.0 598.8 L780.1 598.7" stroke="#a86400" stroke-width="8.5" fill="none" stroke-linecap="round" stroke-linejoin="round"/>
<path d="M780.0 598.8 L780.1 598.7" stroke="#ff9c0a" stroke-width="6.1" fill="none" stroke-linecap="round" stroke-linejoin="round" transform="translate(-0.5,-0.7)"/>
<path d="M780.0 598.8 L780.1 598.7" stroke="#ffc040" stroke-width="2.5" fill="none" stroke-linecap="round" stroke-linejoin="round" transform="translate(-1.0,-1.3)"/>
<path d="M775.6 584.7 L771.2 570.6" stroke="#b80000" stroke-width="8.5" fill="none" stroke-linecap="round" stroke-linejoin="round"/>
<path d="M775.6 584.7 L771.2 570.6" stroke="#f50f0f" stroke-width="6.1" fill="none" stroke-linecap="round" stroke-linejoin="round" transform="translate(-0.5,-0.7)"/>
<path d="M775.6 584.7 L771.2 570.6" stroke="#ff4030" stroke-width="2.5" fill="none" stroke-linecap="round" stroke-linejoin="round" transform="translate(-1.0,-1.3)"/>
<path d="M780.0 598.8 L775.6 584.7" stroke="#a86400" stroke-width="8.5" fill="none" stroke-linecap="butt" stroke-linejoin="round"/>
<path d="M780.0 598.8 L775.6 584.7" stroke="#ff9c0a" stroke-width="6.1" fill="none" stroke-linecap="butt" stroke-linejoin="round" transform="translate(-0.5,-0.7)"/>
<path d="M780.0 598.8 L775.6 584.7" stroke="#ffc040" stroke-width="2.5" fill="none" stroke-linecap="butt" stroke-linejoin="round" transform="translate(-1.0,-1.3)"/>
<path d="M780.0 598.8 L780.0 598.6" stroke="#a86400" stroke-width="8.5" fill="none" stroke-linecap="round" stroke-linejoin="round"/>
<path d="M780.0 598.8 L780.0 598.6" stroke="#ff9c0a" stroke-width="6.1" fill="none" stroke-linecap="round" stroke-linejoin="round" transform="translate(-0.5,-0.7)"/>
<path d="M780.0 598.8 L780.0 598.6" stroke="#ffc040" stroke-width="2.5" fill="none" stroke-linecap="round" stroke-linejoin="round" transform="translate(-1.0,-1.3)"/>
<path d="M727.5 632.5 L746.2 630.0" stroke="#b09a77" stroke-width="8.5" fill="none" stroke-linecap="round" stroke-linejoin="round"/>
<path d="M727.5 632.5 L746.2 630.0" stroke="#e6d0a6" stroke-width="6.1" fill="none" stroke-linecap="round" stroke-linejoin="round" transform="translate(-0.5,-0.7)"/>
<path d="M727.5 632.5 L746.2 630.0" stroke="#f9e8c6" stroke-width="2.5" fill="none" stroke-linecap="round" stroke-linejoin="round" transform="translate(-1.0,-1.3)"/>
<path d="M727.5 638.8 L742.5 636.2" stroke="#6e5f4a" stroke-width="8.0" fill="none" stroke-linecap="round" stroke-linejoin="round"/>
<path d="M727.5 638.8 L742.5 636.2" stroke="#9d8a6b" stroke-width="5.8" fill="none" stroke-linecap="round" stroke-linejoin="round" transform="translate(-0.5,-0.6)"/>
<path d="M727.5 638.8 L742.5 636.2" stroke="#b5a07e" stroke-width="2.4" fill="none" stroke-linecap="round" stroke-linejoin="round" transform="translate(-1.0,-1.2)"/>
<path d="M746.6 625.0 L747.5 613.8" stroke="#700000" stroke-width="8.0" fill="none" stroke-linecap="round" stroke-linejoin="round"/>
<path d="M746.6 625.0 L747.5 613.8" stroke="#c60808" stroke-width="5.8" fill="none" stroke-linecap="round" stroke-linejoin="round" transform="translate(-0.5,-0.6)"/>
<path d="M746.6 625.0 L747.5 613.8" stroke="#e02a20" stroke-width="2.4" fill="none" stroke-linecap="round" stroke-linejoin="round" transform="translate(-1.0,-1.2)"/>
<path d="M746.2 628.8 L746.6 625.0" stroke="#6e5f4a" stroke-width="8.0" fill="none" stroke-linecap="butt" stroke-linejoin="round"/>
<path d="M746.2 628.8 L746.6 625.0" stroke="#9d8a6b" stroke-width="5.8" fill="none" stroke-linecap="butt" stroke-linejoin="round" transform="translate(-0.5,-0.6)"/>
<path d="M746.2 628.8 L746.6 625.0" stroke="#b5a07e" stroke-width="2.4" fill="none" stroke-linecap="butt" stroke-linejoin="round" transform="translate(-1.0,-1.2)"/>
<path d="M746.2 628.8 L746.3 628.7" stroke="#6e5f4a" stroke-width="8.0" fill="none" stroke-linecap="round" stroke-linejoin="round"/>
<path d="M746.2 628.8 L746.3 628.7" stroke="#9d8a6b" stroke-width="5.8" fill="none" stroke-linecap="round" stroke-linejoin="round" transform="translate(-0.5,-0.6)"/>
<path d="M746.2 628.8 L746.3 628.7" stroke="#b5a07e" stroke-width="2.4" fill="none" stroke-linecap="round" stroke-linejoin="round" transform="translate(-1.0,-1.2)"/>
<circle cx="764.4" cy="632.5" r="4.7" fill="url(#g18)"/>
<circle cx="860.0" cy="578.1" r="4.5" fill="url(#g19)"/>
<circle cx="847.5" cy="664.4" r="4.5" fill="url(#g20)"/>
<circle cx="741.9" cy="692.2" r="4.5" fill="url(#g21)"/>
<circle cx="791.2" cy="697.5" r="4.3" fill="url(#g22)"/>
<path d="M845.0 575.0 L862.5 566.2" stroke="#b09a77" stroke-width="8.0" fill="none" stroke-linecap="round" stroke-linejoin="round"/>
<path d="M845.0 575.0 L862.5 566.2" stroke="#e6d0a6" stroke-width="5.8" fill="none" stroke-linecap="round" stroke-linejoin="round" transform="translate(-0.5,-0.6)"/>
<path d="M845.0 575.0 L862.5 566.2" stroke="#f9e8c6" stroke-width="2.4" fill="none" stroke-linecap="round" stroke-linejoin="round" transform="translate(-1.0,-1.2)"/>
<path d="M862.5 566.2 L872.5 557.5" stroke="#b09a77" stroke-width="8.0" fill="none" stroke-linecap="round" stroke-linejoin="round"/>
<path d="M862.5 566.2 L872.5 557.5" stroke="#e6d0a6" stroke-width="5.8" fill="none" stroke-linecap="round" stroke-linejoin="round" transform="translate(-0.5,-0.6)"/>
<path d="M862.5 566.2 L872.5 557.5" stroke="#f9e8c6" stroke-width="2.4" fill="none" stroke-linecap="round" stroke-linejoin="round" transform="translate(-1.0,-1.2)"/>
<path d="M862.5 566.2 L872.5 587.5" stroke="#b09a77" stroke-width="8.0" fill="none" stroke-linecap="round" stroke-linejoin="round"/>
<path d="M862.5 566.2 L872.5 587.5" stroke="#e6d0a6" stroke-width="5.8" fill="none" stroke-linecap="round" stroke-linejoin="round" transform="translate(-0.5,-0.6)"/>
<path d="M862.5 566.2 L872.5 587.5" stroke="#f9e8c6" stroke-width="2.4" fill="none" stroke-linecap="round" stroke-linejoin="round" transform="translate(-1.0,-1.2)"/>
<path d="M846.9 590.3 L828.8 588.8" stroke="#b80000" stroke-width="8.5" fill="none" stroke-linecap="round" stroke-linejoin="round"/>
<path d="M846.9 590.3 L828.8 588.8" stroke="#f50f0f" stroke-width="6.1" fill="none" stroke-linecap="round" stroke-linejoin="round" transform="translate(-0.5,-0.7)"/>
<path d="M846.9 590.3 L828.8 588.8" stroke="#ff4030" stroke-width="2.5" fill="none" stroke-linecap="round" stroke-linejoin="round" transform="translate(-1.0,-1.3)"/>
<path d="M865.0 591.9 L846.9 590.3" stroke="#b09a77" stroke-width="8.5" fill="none" stroke-linecap="butt" stroke-linejoin="round"/>
<path d="M865.0 591.9 L846.9 590.3" stroke="#e6d0a6" stroke-width="6.1" fill="none" stroke-linecap="butt" stroke-linejoin="round" transform="translate(-0.5,-0.7)"/>
<path d="M865.0 591.9 L846.9 590.3" stroke="#f9e8c6" stroke-width="2.5" fill="none" stroke-linecap="butt" stroke-linejoin="round" transform="translate(-1.0,-1.3)"/>
<path d="M865.0 591.9 L864.8 591.9" stroke="#b09a77" stroke-width="8.5" fill="none" stroke-linecap="round" stroke-linejoin="round"/>
<path d="M865.0 591.9 L864.8 591.9" stroke="#e6d0a6" stroke-width="6.1" fill="none" stroke-linecap="round" stroke-linejoin="round" transform="translate(-0.5,-0.7)"/>
<path d="M865.0 591.9 L864.8 591.9" stroke="#f9e8c6" stroke-width="2.5" fill="none" stroke-linecap="round" stroke-linejoin="round" transform="translate(-1.0,-1.3)"/>
<path d="M864.5 593.8 L878.8 597.5" stroke="#b80000" stroke-width="8.5" fill="none" stroke-linecap="round" stroke-linejoin="round"/>
<path d="M864.5 593.8 L878.8 597.5" stroke="#f50f0f" stroke-width="6.1" fill="none" stroke-linecap="round" stroke-linejoin="round" transform="translate(-0.5,-0.7)"/>
<path d="M864.5 593.8 L878.8 597.5" stroke="#ff4030" stroke-width="2.5" fill="none" stroke-linecap="round" stroke-linejoin="round" transform="translate(-1.0,-1.3)"/>
<path d="M855.0 591.2 L864.5 593.8" stroke="#b09a77" stroke-width="8.5" fill="none" stroke-linecap="butt" stroke-linejoin="round"/>
<path d="M855.0 591.2 L864.5 593.8" stroke="#e6d0a6" stroke-width="6.1" fill="none" stroke-linecap="butt" stroke-linejoin="round" transform="translate(-0.5,-0.7)"/>
<path d="M855.0 591.2 L864.5 593.8" stroke="#f9e8c6" stroke-width="2.5" fill="none" stroke-linecap="butt" stroke-linejoin="round" transform="translate(-1.0,-1.3)"/>
<path d="M855.0 591.2 L855.1 591.3" stroke="#b09a77" stroke-width="8.5" fill="none" stroke-linecap="round" stroke-linejoin="round"/>
<path d="M855.0 591.2 L855.1 591.3" stroke="#e6d0a6" stroke-width="6.1" fill="none" stroke-linecap="round" stroke-linejoin="round" transform="translate(-0.5,-0.7)"/>
<path d="M855.0 591.2 L855.1 591.3" stroke="#f9e8c6" stroke-width="2.5" fill="none" stroke-linecap="round" stroke-linejoin="round" transform="translate(-1.0,-1.3)"/>
<path d="M872.5 587.5 L865.0 591.9" stroke="#6e5f4a" stroke-width="8.0" fill="none" stroke-linecap="round" stroke-linejoin="round"/>
<path d="M872.5 587.5 L865.0 591.9" stroke="#9d8a6b" stroke-width="5.8" fill="none" stroke-linecap="round" stroke-linejoin="round" transform="translate(-0.5,-0.6)"/>
<path d="M872.5 587.5 L865.0 591.9" stroke="#b5a07e" stroke-width="2.4" fill="none" stroke-linecap="round" stroke-linejoin="round" transform="translate(-1.0,-1.2)"/>
<path d="M758.8 690.0 L767.5 717.5" stroke="#b09a77" stroke-width="8.0" fill="none" stroke-linecap="round" stroke-linejoin="round"/>
<path d="M758.8 690.0 L767.5 717.5" stroke="#e6d0a6" stroke-width="5.8" fill="none" stroke-linecap="round" stroke-linejoin="round" transform="translate(-0.5,-0.6)"/>
<path d="M758.8 690.0 L767.5 717.5" stroke="#f9e8c6" stroke-width="2.4" fill="none" stroke-linecap="round" stroke-linejoin="round" transform="translate(-1.0,-1.2)"/>
<path d="M740.0 713.1 L760.0 725.0" stroke="#b09a77" stroke-width="8.0" fill="none" stroke-linecap="round" stroke-linejoin="round"/>
<path d="M740.0 713.1 L760.0 725.0" stroke="#e6d0a6" stroke-width="5.8" fill="none" stroke-linecap="round" stroke-linejoin="round" transform="translate(-0.5,-0.6)"/>
<path d="M740.0 713.1 L760.0 725.0" stroke="#f9e8c6" stroke-width="2.4" fill="none" stroke-linecap="round" stroke-linejoin="round" transform="translate(-1.0,-1.2)"/>
<path d="M768.8 728.8 L791.2 720.0" stroke="#b09a77" stroke-width="8.0" fill="none" stroke-linecap="round" stroke-linejoin="round"/>
<path d="M768.8 728.8 L791.2 720.0" stroke="#e6d0a6" stroke-width="5.8" fill="none" stroke-linecap="round" stroke-linejoin="round" transform="translate(-0.5,-0.6)"/>
<path d="M768.8 728.8 L791.2 720.0" stroke="#f9e8c6" stroke-width="2.4" fill="none" stroke-linecap="round" stroke-linejoin="round" transform="translate(-1.0,-1.2)"/>
<path d="M762.2 747.5 L758.1 762.5" stroke="#b80000" stroke-width="8.0" fill="none" stroke-linecap="round" stroke-linejoin="round"/>
<path d="M762.2 747.5 L758.1 762.5" stroke="#f50f0f" stroke-width="5.8" fill="none" stroke-linecap="round" stroke-linejoin="round" transform="translate(-0.5,-0.6)"/>
<path d="M762.2 747.5 L758.1 762.5" stroke="#ff4030" stroke-width="2.4" fill="none" stroke-linecap="round" stroke-linejoin="round" transform="translate(-1.0,-1.2)"/>
<path d="M766.2 732.5 L762.2 747.5" stroke="#b09a77" stroke-width="8.0" fill="none" stroke-linecap="butt" stroke-linejoin="round"/>
<path d="M766.2 732.5 L762.2 747.5" stroke="#e6d0a6" stroke-width="5.8" fill="none" stroke-linecap="butt" stroke-linejoin="round" transform="translate(-0.5,-0.6)"/>
<path d="M766.2 732.5 L762.2 747.5" stroke="#f9e8c6" stroke-width="2.4" fill="none" stroke-linecap="butt" stroke-linejoin="round" transform="translate(-1.0,-1.2)"/>
<path d="M766.2 732.5 L766.2 732.6" stroke="#b09a77" stroke-width="8.0" fill="none" stroke-linecap="round" stroke-linejoin="round"/>
<path d="M766.2 732.5 L766.2 732.6" stroke="#e6d0a6" stroke-width="5.8" fill="none" stroke-linecap="round" stroke-linejoin="round" transform="translate(-0.5,-0.6)"/>
<path d="M766.2 732.5 L766.2 732.6" stroke="#f9e8c6" stroke-width="2.4" fill="none" stroke-linecap="round" stroke-linejoin="round" transform="translate(-1.0,-1.2)"/>
<path d="M763.8 731.2 L782.5 732.5" stroke="#b09a77" stroke-width="8.5" fill="none" stroke-linecap="round" stroke-linejoin="round"/>
<path d="M763.8 731.2 L782.5 732.5" stroke="#e6d0a6" stroke-width="6.1" fill="none" stroke-linecap="round" stroke-linejoin="round" transform="translate(-0.5,-0.7)"/>
<path d="M763.8 731.2 L782.5 732.5" stroke="#f9e8c6" stroke-width="2.5" fill="none" stroke-linecap="round" stroke-linejoin="round" transform="translate(-1.0,-1.3)"/>
<path d="M782.5 732.5 L811.2 748.8" stroke="#b09a77" stroke-width="8.5" fill="none" stroke-linecap="round" stroke-linejoin="round"/>
<path d="M782.5 732.5 L811.2 748.8" stroke="#e6d0a6" stroke-width="6.1" fill="none" stroke-linecap="round" stroke-linejoin="round" transform="translate(-0.5,-0.7)"/>
<path d="M782.5 732.5 L811.2 748.8" stroke="#f9e8c6" stroke-width="2.5" fill="none" stroke-linecap="round" stroke-linejoin="round" transform="translate(-1.0,-1.3)"/>
<path d="M811.2 748.8 L828.8 746.9" stroke="#b09a77" stroke-width="8.5" fill="none" stroke-linecap="round" stroke-linejoin="round"/>
<path d="M811.2 748.8 L828.8 746.9" stroke="#e6d0a6" stroke-width="6.1" fill="none" stroke-linecap="round" stroke-linejoin="round" transform="translate(-0.5,-0.7)"/>
<path d="M811.2 748.8 L828.8 746.9" stroke="#f9e8c6" stroke-width="2.5" fill="none" stroke-linecap="round" stroke-linejoin="round" transform="translate(-1.0,-1.3)"/>
<path d="M808.4 766.2 L805.6 782.5" stroke="#b80000" stroke-width="8.0" fill="none" stroke-linecap="round" stroke-linejoin="round"/>
<path d="M808.4 766.2 L805.6 782.5" stroke="#f50f0f" stroke-width="5.8" fill="none" stroke-linecap="round" stroke-linejoin="round" transform="translate(-0.5,-0.6)"/>
<path d="M808.4 766.2 L805.6 782.5" stroke="#ff4030" stroke-width="2.4" fill="none" stroke-linecap="round" stroke-linejoin="round" transform="translate(-1.0,-1.2)"/>
<path d="M811.2 750.0 L808.4 766.2" stroke="#b09a77" stroke-width="8.0" fill="none" stroke-linecap="butt" stroke-linejoin="round"/>
<path d="M811.2 750.0 L808.4 766.2" stroke="#e6d0a6" stroke-width="5.8" fill="none" stroke-linecap="butt" stroke-linejoin="round" transform="translate(-0.5,-0.6)"/>
<path d="M811.2 750.0 L808.4 766.2" stroke="#f9e8c6" stroke-width="2.4" fill="none" stroke-linecap="butt" stroke-linejoin="round" transform="translate(-1.0,-1.2)"/>
<path d="M811.2 750.0 L811.2 750.2" stroke="#b09a77" stroke-width="8.0" fill="none" stroke-linecap="round" stroke-linejoin="round"/>
<path d="M811.2 750.0 L811.2 750.2" stroke="#e6d0a6" stroke-width="5.8" fill="none" stroke-linecap="round" stroke-linejoin="round" transform="translate(-0.5,-0.6)"/>
<path d="M811.2 750.0 L811.2 750.2" stroke="#f9e8c6" stroke-width="2.4" fill="none" stroke-linecap="round" stroke-linejoin="round" transform="translate(-1.0,-1.2)"/>
<path d="M774.8 713.2 L785.6 703.1" stroke="#b80000" stroke-width="8.5" fill="none" stroke-linecap="round" stroke-linejoin="round"/>
<path d="M774.8 713.2 L785.6 703.1" stroke="#f50f0f" stroke-width="6.1" fill="none" stroke-linecap="round" stroke-linejoin="round" transform="translate(-0.5,-0.7)"/>
<path d="M774.8 713.2 L785.6 703.1" stroke="#ff4030" stroke-width="2.5" fill="none" stroke-linecap="round" stroke-linejoin="round" transform="translate(-1.0,-1.3)"/>
<path d="M767.5 720.0 L774.8 713.2" stroke="#b09a77" stroke-width="8.5" fill="none" stroke-linecap="butt" stroke-linejoin="round"/>
<path d="M767.5 720.0 L774.8 713.2" stroke="#e6d0a6" stroke-width="6.1" fill="none" stroke-linecap="butt" stroke-linejoin="round" transform="translate(-0.5,-0.7)"/>
<path d="M767.5 720.0 L774.8 713.2" stroke="#f9e8c6" stroke-width="2.5" fill="none" stroke-linecap="butt" stroke-linejoin="round" transform="translate(-1.0,-1.3)"/>
<path d="M767.5 720.0 L767.6 719.9" stroke="#b09a77" stroke-width="8.5" fill="none" stroke-linecap="round" stroke-linejoin="round"/>
<path d="M767.5 720.0 L767.6 719.9" stroke="#e6d0a6" stroke-width="6.1" fill="none" stroke-linecap="round" stroke-linejoin="round" transform="translate(-0.5,-0.7)"/>
<path d="M767.5 720.0 L767.6 719.9" stroke="#f9e8c6" stroke-width="2.5" fill="none" stroke-linecap="round" stroke-linejoin="round" transform="translate(-1.0,-1.3)"/>
<path d="M741.2 736.9 L768.8 720.0" stroke="#b09a77" stroke-width="9.5" fill="none" stroke-linecap="round" stroke-linejoin="round"/>
<path d="M741.2 736.9 L768.8 720.0" stroke="#e6d0a6" stroke-width="6.8" fill="none" stroke-linecap="round" stroke-linejoin="round" transform="translate(-0.6,-0.8)"/>
<path d="M741.2 736.9 L768.8 720.0" stroke="#f9e8c6" stroke-width="2.9" fill="none" stroke-linecap="round" stroke-linejoin="round" transform="translate(-1.1,-1.4)"/>
<path d="M685.8 644.2 L660.0 675.0" stroke="#b09a77" stroke-width="8.5" fill="none" stroke-linecap="round" stroke-linejoin="round"/>
<path d="M685.8 644.2 L660.0 675.0" stroke="#e6d0a6" stroke-width="6.1" fill="none" stroke-linecap="round" stroke-linejoin="round" transform="translate(-0.5,-0.7)"/>
<path d="M685.8 644.2 L660.0 675.0" stroke="#f9e8c6" stroke-width="2.5" fill="none" stroke-linecap="round" stroke-linejoin="round" transform="translate(-1.0,-1.3)"/>
<path d="M675.0 617.5 L685.8 644.2" stroke="#b09a77" stroke-width="8.5" fill="none" stroke-linecap="round" stroke-linejoin="round"/>
<path d="M675.0 617.5 L685.8 644.2" stroke="#e6d0a6" stroke-width="6.1" fill="none" stroke-linecap="round" stroke-linejoin="round" transform="translate(-0.5,-0.7)"/>
<path d="M675.0 617.5 L685.8 644.2" stroke="#f9e8c6" stroke-width="2.5" fill="none" stroke-linecap="round" stroke-linejoin="round" transform="translate(-1.0,-1.3)"/>
<path d="M655.8 676.4 L645.8 679.7" stroke="#b80000" stroke-width="8.5" fill="none" stroke-linecap="round" stroke-linejoin="round"/>
<path d="M655.8 676.4 L645.8 679.7" stroke="#f50f0f" stroke-width="6.1" fill="none" stroke-linecap="round" stroke-linejoin="round" transform="translate(-0.5,-0.7)"/>
<path d="M655.8 676.4 L645.8 679.7" stroke="#ff4030" stroke-width="2.5" fill="none" stroke-linecap="round" stroke-linejoin="round" transform="translate(-1.0,-1.3)"/>
<path d="M660.0 675.0 L655.8 676.4" stroke="#b09a77" stroke-width="8.5" fill="none" stroke-linecap="butt" stroke-linejoin="round"/>
<path d="M660.0 675.0 L655.8 676.4" stroke="#e6d0a6" stroke-width="6.1" fill="none" stroke-linecap="butt" stroke-linejoin="round" transform="translate(-0.5,-0.7)"/>
<path d="M660.0 675.0 L655.8 676.4" stroke="#f9e8c6" stroke-width="2.5" fill="none" stroke-linecap="butt" stroke-linejoin="round" transform="translate(-1.0,-1.3)"/>
<path d="M660.0 675.0 L660.0 675.0" stroke="#b09a77" stroke-width="8.5" fill="none" stroke-linecap="round" stroke-linejoin="round"/>
<path d="M660.0 675.0 L660.0 675.0" stroke="#e6d0a6" stroke-width="6.1" fill="none" stroke-linecap="round" stroke-linejoin="round" transform="translate(-0.5,-0.7)"/>
<path d="M660.0 675.0 L660.0 675.0" stroke="#f9e8c6" stroke-width="2.5" fill="none" stroke-linecap="round" stroke-linejoin="round" transform="translate(-1.0,-1.3)"/>
<path d="M659.0 680.0 L656.7 691.7" stroke="#b80000" stroke-width="8.5" fill="none" stroke-linecap="round" stroke-linejoin="round"/>
<path d="M659.0 680.0 L656.7 691.7" stroke="#f50f0f" stroke-width="6.1" fill="none" stroke-linecap="round" stroke-linejoin="round" transform="translate(-0.5,-0.7)"/>
<path d="M659.0 680.0 L656.7 691.7" stroke="#ff4030" stroke-width="2.5" fill="none" stroke-linecap="round" stroke-linejoin="round" transform="translate(-1.0,-1.3)"/>
<path d="M660.0 675.0 L659.0 680.0" stroke="#b09a77" stroke-width="8.5" fill="none" stroke-linecap="butt" stroke-linejoin="round"/>
<path d="M660.0 675.0 L659.0 680.0" stroke="#e6d0a6" stroke-width="6.1" fill="none" stroke-linecap="butt" stroke-linejoin="round" transform="translate(-0.5,-0.7)"/>
<path d="M660.0 675.0 L659.0 680.0" stroke="#f9e8c6" stroke-width="2.5" fill="none" stroke-linecap="butt" stroke-linejoin="round" transform="translate(-1.0,-1.3)"/>
<path d="M660.0 675.0 L660.0 675.0" stroke="#b09a77" stroke-width="8.5" fill="none" stroke-linecap="round" stroke-linejoin="round"/>
<path d="M660.0 675.0 L660.0 675.0" stroke="#e6d0a6" stroke-width="6.1" fill="none" stroke-linecap="round" stroke-linejoin="round" transform="translate(-0.5,-0.7)"/>
<path d="M660.0 675.0 L660.0 675.0" stroke="#f9e8c6" stroke-width="2.5" fill="none" stroke-linecap="round" stroke-linejoin="round" transform="translate(-1.0,-1.3)"/>
<path d="M686.2 672.5 L682.5 691.2" stroke="#463b2e" stroke-width="7.0" fill="none" stroke-linecap="round" stroke-linejoin="round"/>
<path d="M686.2 672.5 L682.5 691.2" stroke="#6b5c47" stroke-width="5.0" fill="none" stroke-linecap="round" stroke-linejoin="round" transform="translate(-0.4,-0.6)"/>
<path d="M686.2 672.5 L682.5 691.2" stroke="#7d6c55" stroke-width="2.1" fill="none" stroke-linecap="round" stroke-linejoin="round" transform="translate(-0.8,-1.1)"/>
<path d="M652.5 698.3 L668.3 708.3" stroke="#b09a77" stroke-width="9.0" fill="none" stroke-linecap="round" stroke-linejoin="round"/>
<path d="M652.5 698.3 L668.3 708.3" stroke="#e6d0a6" stroke-width="6.5" fill="none" stroke-linecap="round" stroke-linejoin="round" transform="translate(-0.5,-0.7)"/>
<path d="M652.5 698.3 L668.3 708.3" stroke="#f9e8c6" stroke-width="2.7" fill="none" stroke-linecap="round" stroke-linejoin="round" transform="translate(-1.1,-1.3)"/>
<path d="M668.3 708.3 L675.8 726.7" stroke="#9c8868" stroke-width="8.5" fill="none" stroke-linecap="round" stroke-linejoin="round"/>
<path d="M668.3 708.3 L675.8 726.7" stroke="#cbb58e" stroke-width="6.1" fill="none" stroke-linecap="round" stroke-linejoin="round" transform="translate(-0.5,-0.7)"/>
<path d="M668.3 708.3 L675.8 726.7" stroke="#dcc6a0" stroke-width="2.5" fill="none" stroke-linecap="round" stroke-linejoin="round" transform="translate(-1.0,-1.3)"/>
<path d="M671.7 726.7 L680.0 740.0" stroke="#9c8868" stroke-width="8.0" fill="none" stroke-linecap="round" stroke-linejoin="round"/>
<path d="M671.7 726.7 L680.0 740.0" stroke="#c4ae88" stroke-width="5.8" fill="none" stroke-linecap="round" stroke-linejoin="round" transform="translate(-0.5,-0.6)"/>
<path d="M671.7 726.7 L680.0 740.0" stroke="#d4be98" stroke-width="2.4" fill="none" stroke-linecap="round" stroke-linejoin="round" transform="translate(-1.0,-1.2)"/>
<path d="M682.5 723.3 L686.7 743.3" stroke="#b09a77" stroke-width="9.0" fill="none" stroke-linecap="round" stroke-linejoin="round"/>
<path d="M682.5 723.3 L686.7 743.3" stroke="#e6d0a6" stroke-width="6.5" fill="none" stroke-linecap="round" stroke-linejoin="round" transform="translate(-0.5,-0.7)"/>
<path d="M682.5 723.3 L686.7 743.3" stroke="#f9e8c6" stroke-width="2.7" fill="none" stroke-linecap="round" stroke-linejoin="round" transform="translate(-1.1,-1.3)"/>
<path d="M697.1 754.6 L707.5 765.8" stroke="#700000" stroke-width="8.5" fill="none" stroke-linecap="round" stroke-linejoin="round"/>
<path d="M697.1 754.6 L707.5 765.8" stroke="#c60808" stroke-width="6.1" fill="none" stroke-linecap="round" stroke-linejoin="round" transform="translate(-0.5,-0.7)"/>
<path d="M697.1 754.6 L707.5 765.8" stroke="#e02a20" stroke-width="2.5" fill="none" stroke-linecap="round" stroke-linejoin="round" transform="translate(-1.0,-1.3)"/>
<path d="M686.7 743.3 L697.1 754.6" stroke="#b09a77" stroke-width="8.5" fill="none" stroke-linecap="butt" stroke-linejoin="round"/>
<path d="M686.7 743.3 L697.1 754.6" stroke="#e6d0a6" stroke-width="6.1" fill="none" stroke-linecap="butt" stroke-linejoin="round" transform="translate(-0.5,-0.7)"/>
<path d="M686.7 743.3 L697.1 754.6" stroke="#f9e8c6" stroke-width="2.5" fill="none" stroke-linecap="butt" stroke-linejoin="round" transform="translate(-1.0,-1.3)"/>
<path d="M686.7 743.3 L686.8 743.4" stroke="#b09a77" stroke-width="8.5" fill="none" stroke-linecap="round" stroke-linejoin="round"/>
<path d="M686.7 743.3 L686.8 743.4" stroke="#e6d0a6" stroke-width="6.1" fill="none" stroke-linecap="round" stroke-linejoin="round" transform="translate(-0.5,-0.7)"/>
<path d="M686.7 743.3 L686.8 743.4" stroke="#f9e8c6" stroke-width="2.5" fill="none" stroke-linecap="round" stroke-linejoin="round" transform="translate(-1.0,-1.3)"/>
<path d="M694.0 750.2 L700.8 756.7" stroke="#b80000" stroke-width="8.5" fill="none" stroke-linecap="round" stroke-linejoin="round"/>
<path d="M694.0 750.2 L700.8 756.7" stroke="#f50f0f" stroke-width="6.1" fill="none" stroke-linecap="round" stroke-linejoin="round" transform="translate(-0.5,-0.7)"/>
<path d="M694.0 750.2 L700.8 756.7" stroke="#ff4030" stroke-width="2.5" fill="none" stroke-linecap="round" stroke-linejoin="round" transform="translate(-1.0,-1.3)"/>
<path d="M688.3 745.0 L694.0 750.2" stroke="#b09a77" stroke-width="8.5" fill="none" stroke-linecap="butt" stroke-linejoin="round"/>
<path d="M688.3 745.0 L694.0 750.2" stroke="#e6d0a6" stroke-width="6.1" fill="none" stroke-linecap="butt" stroke-linejoin="round" transform="translate(-0.5,-0.7)"/>
<path d="M688.3 745.0 L694.0 750.2" stroke="#f9e8c6" stroke-width="2.5" fill="none" stroke-linecap="butt" stroke-linejoin="round" transform="translate(-1.0,-1.3)"/>
<path d="M688.3 745.0 L688.4 745.1" stroke="#b09a77" stroke-width="8.5" fill="none" stroke-linecap="round" stroke-linejoin="round"/>
<path d="M688.3 745.0 L688.4 745.1" stroke="#e6d0a6" stroke-width="6.1" fill="none" stroke-linecap="round" stroke-linejoin="round" transform="translate(-0.5,-0.7)"/>
<path d="M688.3 745.0 L688.4 745.1" stroke="#f9e8c6" stroke-width="2.5" fill="none" stroke-linecap="round" stroke-linejoin="round" transform="translate(-1.0,-1.3)"/>
<path d="M600.0 750.0 C602.1 751.7 607.5 758.5 612.5 760.0 C617.5 761.5 624.2 760.4 630.0 758.8 C635.8 757.1 640.4 754.0 647.5 750.0 C654.6 746.0 668.3 737.5 672.5 735.0" stroke="#6e5f4a" stroke-width="6.5" fill="none" stroke-linecap="round" stroke-linejoin="round"/>
<path d="M600.0 750.0 C602.1 751.7 607.5 758.5 612.5 760.0 C617.5 761.5 624.2 760.4 630.0 758.8 C635.8 757.1 640.4 754.0 647.5 750.0 C654.6 746.0 668.3 737.5 672.5 735.0" stroke="#9d8a6b" stroke-width="4.7" fill="none" stroke-linecap="round" stroke-linejoin="round" transform="translate(-0.4,-0.5)"/>
<path d="M600.0 750.0 C602.1 751.7 607.5 758.5 612.5 760.0 C617.5 761.5 624.2 760.4 630.0 758.8 C635.8 757.1 640.4 754.0 647.5 750.0 C654.6 746.0 668.3 737.5 672.5 735.0" stroke="#b5a07e" stroke-width="1.9" fill="none" stroke-linecap="round" stroke-linejoin="round" transform="translate(-0.8,-1.0)"/>
<path d="M585.0 726.2 L593.8 746.2" stroke="#b09a77" stroke-width="8.0" fill="none" stroke-linecap="round" stroke-linejoin="round"/>
<path d="M585.0 726.2 L593.8 746.2" stroke="#e6d0a6" stroke-width="5.8" fill="none" stroke-linecap="round" stroke-linejoin="round" transform="translate(-0.5,-0.6)"/>
<path d="M585.0 726.2 L593.8 746.2" stroke="#f9e8c6" stroke-width="2.4" fill="none" stroke-linecap="round" stroke-linejoin="round" transform="translate(-1.0,-1.2)"/>
<path d="M593.8 746.2 L626.2 738.8" stroke="#b09a77" stroke-width="8.5" fill="none" stroke-linecap="round" stroke-linejoin="round"/>
<path d="M593.8 746.2 L626.2 738.8" stroke="#e6d0a6" stroke-width="6.1" fill="none" stroke-linecap="round" stroke-linejoin="round" transform="translate(-0.5,-0.7)"/>
<path d="M593.8 746.2 L626.2 738.8" stroke="#f9e8c6" stroke-width="2.5" fill="none" stroke-linecap="round" stroke-linejoin="round" transform="translate(-1.0,-1.3)"/>
<path d="M626.2 738.8 L646.2 763.1" stroke="#b09a77" stroke-width="8.5" fill="none" stroke-linecap="round" stroke-linejoin="round"/>
<path d="M626.2 738.8 L646.2 763.1" stroke="#e6d0a6" stroke-width="6.1" fill="none" stroke-linecap="round" stroke-linejoin="round" transform="translate(-0.5,-0.7)"/>
<path d="M626.2 738.8 L646.2 763.1" stroke="#f9e8c6" stroke-width="2.5" fill="none" stroke-linecap="round" stroke-linejoin="round" transform="translate(-1.0,-1.3)"/>
<path d="M646.2 763.1 L675.6 758.1" stroke="#b09a77" stroke-width="8.5" fill="none" stroke-linecap="round" stroke-linejoin="round"/>
<path d="M646.2 763.1 L675.6 758.1" stroke="#e6d0a6" stroke-width="6.1" fill="none" stroke-linecap="round" stroke-linejoin="round" transform="translate(-0.5,-0.7)"/>
<path d="M646.2 763.1 L675.6 758.1" stroke="#f9e8c6" stroke-width="2.5" fill="none" stroke-linecap="round" stroke-linejoin="round" transform="translate(-1.0,-1.3)"/>
<path d="M683.0 768.1 L693.1 781.9" stroke="#1d3aa8" stroke-width="8.5" fill="none" stroke-linecap="round" stroke-linejoin="round"/>
<path d="M683.0 768.1 L693.1 781.9" stroke="#3362e8" stroke-width="6.1" fill="none" stroke-linecap="round" stroke-linejoin="round" transform="translate(-0.5,-0.7)"/>
<path d="M683.0 768.1 L693.1 781.9" stroke="#6d95ff" stroke-width="2.5" fill="none" stroke-linecap="round" stroke-linejoin="round" transform="translate(-1.0,-1.3)"/>
<path d="M675.6 758.1 L683.0 768.1" stroke="#b09a77" stroke-width="8.5" fill="none" stroke-linecap="butt" stroke-linejoin="round"/>
<path d="M675.6 758.1 L683.0 768.1" stroke="#e6d0a6" stroke-width="6.1" fill="none" stroke-linecap="butt" stroke-linejoin="round" transform="translate(-0.5,-0.7)"/>
<path d="M675.6 758.1 L683.0 768.1" stroke="#f9e8c6" stroke-width="2.5" fill="none" stroke-linecap="butt" stroke-linejoin="round" transform="translate(-1.0,-1.3)"/>
<path d="M675.6 758.1 L675.7 758.2" stroke="#b09a77" stroke-width="8.5" fill="none" stroke-linecap="round" stroke-linejoin="round"/>
<path d="M675.6 758.1 L675.7 758.2" stroke="#e6d0a6" stroke-width="6.1" fill="none" stroke-linecap="round" stroke-linejoin="round" transform="translate(-0.5,-0.7)"/>
<path d="M675.6 758.1 L675.7 758.2" stroke="#f9e8c6" stroke-width="2.5" fill="none" stroke-linecap="round" stroke-linejoin="round" transform="translate(-1.0,-1.3)"/>
</svg>
<!--/MOL-->

<!-- Log panel -->
<div class="t" style="left:1349px;top:233px">Log</div>

<svg class="abs" style="left:1892px;top:236px" width="28" height="12" viewBox="0 0 28 12">
 <rect x="1" y="0.500" width="10.500" height="10.500" rx="2" fill="#f4f4f4" stroke="#6e6e6e" stroke-width="1"/>
 <rect x="5" y="2.800" width="4.200" height="4" fill="none" stroke="#555" stroke-width="0.900"/>
 <rect x="3.200" y="4.800" width="4.200" height="4" fill="#f4f4f4" stroke="#555" stroke-width="0.900"/>
 <rect x="15" y="0.500" width="10.500" height="10.500" rx="2" fill="#f4f4f4" stroke="#6e6e6e" stroke-width="1"/>
 <path d="M17.600 3 L22.900 8.500 M22.900 3 L17.600 8.500" stroke="#333" stroke-width="1.700" fill="none"/>
</svg>
<!-- Models panel -->
<div class="t" style="left:1349px;top:874px">Models</div>

<svg class="abs" style="left:1892px;top:877px" width="28" height="12" viewBox="0 0 28 12">
 <rect x="1" y="0.500" width="10.500" height="10.500" rx="2" fill="#f4f4f4" stroke="#6e6e6e" stroke-width="1"/>
 <rect x="5" y="2.800" width="4.200" height="4" fill="none" stroke="#555" stroke-width="0.900"/>
 <rect x="3.200" y="4.800" width="4.200" height="4" fill="#f4f4f4" stroke="#555" stroke-width="0.900"/>
 <rect x="15" y="0.500" width="10.500" height="10.500" rx="2" fill="#f4f4f4" stroke="#6e6e6e" stroke-width="1"/>
 <path d="M17.600 3 L22.900 8.500 M22.900 3 L17.600 8.500" stroke="#333" stroke-width="1.700" fill="none"/>
</svg>
<div class="abs" style="left:1345px;top:894px;width:494px;height:125px;box-sizing:border-box;border:1px solid #a9a9a9;border-right:2px solid #b4b4b4;background:#fff"></div>
<div class="abs" style="left:1346px;top:895px;width:491px;height:22px;background:linear-gradient(#ffffff,#f6f6f6 45%,#ebebeb);border-bottom:1px solid #b9b9b9"></div>
<div class="abs" style="left:1545px;top:896px;width:1px;height:21px;background:#cfcfcf"></div>
<div class="abs" style="left:1589px;top:896px;width:1px;height:21px;background:#cfcfcf"></div>
<div class="abs" style="left:1633px;top:896px;width:1px;height:21px;background:#cfcfcf"></div>
<div class="abs" style="left:1677px;top:896px;width:1px;height:21px;background:#cfcfcf"></div>
<div class="t" style="left:1348px;top:898px">Name</div>
<div class="t" style="left:1548px;top:898px">ID</div>
<div class="t" style="left:1369px;top:919px">2qmt</div>
<div class="t" style="left:1548px;top:919px">1</div>
<div class="abs" style="left:1590px;top:918px;width:16px;height:16px;box-sizing:border-box;border:1px solid #b39a78;border-radius:3px;background:linear-gradient(#ecd6b4,#dfc39a)"></div>
<svg class="abs" style="left:1634px;top:896px" width="64" height="40" viewBox="1634 896 64 40">
 <path d="M1636 906 Q1644 899.500 1652 906 Q1644 912.500 1636 906 Z" fill="#fff" stroke="#111" stroke-width="1"/>
 <circle cx="1644" cy="906" r="3.300" fill="#fff" stroke="#111" stroke-width="0.900"/>
 <circle cx="1644" cy="906" r="1.900" fill="#000"/>
 <circle cx="1686.700" cy="901.300" r="4.100" fill="#11d011"/>
 <path d="M1686 900.500 q1.100 -0.600 1.600 0.600 l0.700 4 l3.300 0.800 q1.800 0.700 1.700 2.400 l-0.400 4.500 q-0.300 1.200 -1.500 1.200 h-3.300 q-1 0 -1.700 -1 l-3.200 -4.300 q-0.500 -1 0.500 -1.500 q1 -0.300 1.700 0.500 l1.100 1.200 z" fill="#000"/>
 <rect x="1637.500" y="920.500" width="13" height="13" fill="#fff" stroke="#bdbdbd" stroke-width="1"/>
 <path d="M1640.300 927 L1643.300 931 L1648 922.800" fill="none" stroke="#000" stroke-width="1.900"/>
 <rect x="1681.500" y="920.500" width="13" height="13" fill="#fff" stroke="#c4c4c4" stroke-width="1"/>
</svg>
<!-- Models buttons -->
<div class="mbtn" style="top:896px"><span>Close</span></div>
<div class="mbtn" style="top:923px"><span>Hide</span></div>
<div class="mbtn" style="top:950px"><span>Show</span></div>
<div class="mbtn" style="top:977px"><span>View</span></div>
<!-- scrollbars -->
<div class="abs" style="left:1906px;top:895px;width:14px;height:108px;background:linear-gradient(90deg,#e6e6e6,#f8f8f8 50%,#ececec);"></div>
<div class="abs" style="left:1906px;top:895px;width:13px;height:13px;box-sizing:border-box;border:1px solid #cfcfcf;background:#f6f6f6"></div>
<div class="abs" style="left:1906px;top:974px;width:14px;height:16px;background:#dddddd"></div>
<div class="abs" style="left:1906px;top:990px;width:13px;height:13px;box-sizing:border-box;border:1px solid #cfcfcf;background:#f6f6f6"></div>
<div class="abs" style="left:1840px;top:1005px;width:66px;height:13px;background:linear-gradient(#e9e9e9,#f8f8f8 50%,#ececec);"></div>
<div class="abs" style="left:1840px;top:1005px;width:13px;height:13px;box-sizing:border-box;border:1px solid #cfcfcf;background:#f6f6f6"></div>
<div class="abs" style="left:1884px;top:1005px;width:8px;height:13px;background:#dddddd"></div>
<div class="abs" style="left:1892px;top:1005px;width:13px;height:13px;box-sizing:border-box;border:1px solid #cfcfcf;background:#f6f6f6"></div>
<div class="abs" style="left:1906px;top:1004px;width:14px;height:14px;background:#ebebeb;border-left:1px solid #d6d6d6;border-top:1px solid #d6d6d6;box-sizing:border-box"></div>
<svg class="abs" style="left:1838px;top:894px" width="82" height="126" viewBox="1838 894 82 126">
 <path d="M1908.300 903.400 L1912.300 898.900 L1916.300 903.400 Z" fill="#4a4a4a"/>
 <path d="M1908.300 994.700 L1916.300 994.700 L1912.300 999.200 Z" fill="#4a4a4a"/>
 <path d="M1847.300 1007.500 L1847.300 1015 L1843.100 1011.250 Z" fill="#4a4a4a"/>
 <path d="M1895.900 1007.500 L1895.900 1015 L1900.100 1011.250 Z" fill="#4a4a4a"/>
</svg>
<!-- Command line -->
<div class="t" style="left:2px;top:1031.500px;letter-spacing:-0.150px">Command:</div>
<div class="abs" style="left:80px;top:1026px;width:1839px;height:26px;box-sizing:border-box;border:1px solid #a8a8a8;border-radius:3px;background:#fff"></div>
<div class="abs" style="left:84px;top:1030px;width:77px;height:19px;background:#308cc6"></div>
<div class="t" style="left:84px;top:1031px;color:#fff">open 2qmt</div>
<div class="abs" style="left:160px;top:1030px;width:1px;height:19px;background:#e8843a"></div>
<div class="abs" style="left:1899px;top:1027px;width:19px;height:24px;border-left:1px solid #c9c9c9;background:linear-gradient(#fdfdfd,#ececec);border-radius:0 3px 3px 0"></div>
<svg class="abs" style="left:1900px;top:1034px" width="16" height="10" viewBox="0 0 16 10"><path d="M4.700 3 L12.300 3 L8.500 7.300 Z" fill="#4a4a4a"/></svg>
<!-- Status bar -->
<div class="abs" style="left:2px;top:1055px;width:1857px;height:23px;background:#d9d9d9"></div>
<div class="abs" style="left:1865px;top:1055px;width:23px;height:23px;box-sizing:border-box;border:1px solid #bdbdbd;border-radius:4px;background:linear-gradient(#fdfdfd,#ececec)"></div>
<div class="abs" style="left:1895px;top:1055px;width:23px;height:23px;box-sizing:border-box;border:1px solid #bdbdbd;border-radius:4px;background:linear-gradient(#fdfdfd,#ececec)"></div>
<svg class="abs" style="left:1865px;top:1055px" width="55" height="24" viewBox="1865 1055 55 24">
 <rect x="1869.500" y="1058.500" width="15.500" height="15.500" fill="none" stroke="#000" stroke-width="1" stroke-dasharray="1 1.200"/>
 <rect x="1869.500" y="1058.500" width="7" height="7" fill="#fff" stroke="#000" stroke-width="1.200"/>
 <path d="M1877.500 1067 L1882.500 1072" stroke="#0a8a1a" stroke-width="1.100"/>
 <path d="M1883.500 1073 L1879.800 1072.300 L1882.800 1069.300 Z" fill="#0a8a1a"/>
 <rect x="1899" y="1058" width="16" height="16" fill="#00008b"/>
 <path d="M1912 1059.800 L1902.300 1066.400 L1906.600 1067 L1901.800 1072.600 L1912.300 1065.300 L1908 1064.700 Z" fill="#ffe600"/>
</svg>
<!-- splitter handle dots -->
<div class="abs" style="left:950px;top:227px;width:20px;height:1px;background:repeating-linear-gradient(90deg,#c0c0c0 0 1px,transparent 1px 3px)"></div>
<div class="abs" style="left:1624px;top:868px;width:20px;height:1px;background:repeating-linear-gradient(90deg,#c0c0c0 0 1px,transparent 1px 3px)"></div>
<div class="abs" style="left:950px;top:1022px;width:20px;height:1px;background:repeating-linear-gradient(90deg,#c0c0c0 0 1px,transparent 1px 3px)"></div>
</div>
</body>
</html>
